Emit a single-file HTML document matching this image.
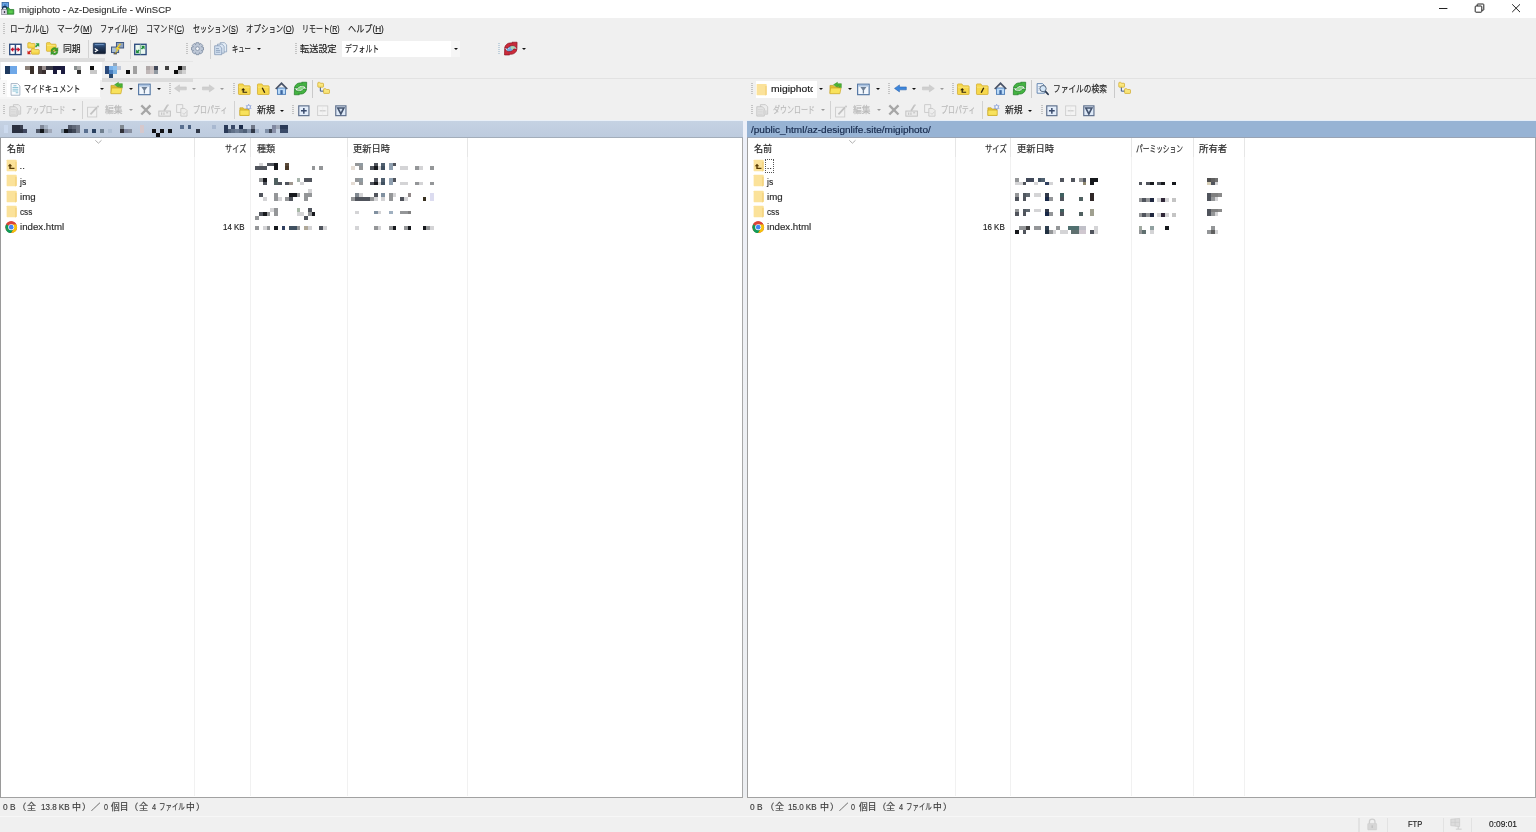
<!DOCTYPE html>
<html lang="ja"><head><meta charset="utf-8"><title>migiphoto - Az-DesignLife - WinSCP</title>
<style>
html,body{margin:0;padding:0}
body{width:1536px;height:832px;overflow:hidden;background:#f0f0f0;position:relative;
 font-family:"Liberation Sans","Noto Sans CJK JP",sans-serif;font-size:9.6px;color:#1b1b1b}
.a{position:absolute}
.t{position:absolute;white-space:nowrap;line-height:12px;height:12px;transform-origin:0 0;-webkit-text-stroke:0.17px currentColor}
.g{color:#b9b9b9}
svg{position:absolute;overflow:visible}
.hd{position:absolute;width:2px;height:12px;background:repeating-linear-gradient(to bottom,#c4c4c4 0,#c4c4c4 1px,transparent 1px,transparent 2px)}
.sep{position:absolute;width:1px;background:#d2d2d2}
.dd{position:absolute;width:0;height:0;border-left:2.3px solid transparent;border-right:2.3px solid transparent;border-top:2.7px solid #111}
.dd.g{border-top-color:#9a9a9a}
.cs{position:absolute;width:1px;top:138px;background:linear-gradient(#e6e6e6 0,#e6e6e6 19.5px,#f1f1f1 19.5px,#f1f1f1 100%)}

.m{position:absolute;display:block}
</style></head>
<body>
<div id="app" style="position:absolute;left:0;top:0;width:1536px;height:832px;will-change:transform">
<div class="a" style="left:0px;top:0px;width:1536px;height:18px;background:#fff;"></div>
<svg style="left:1.40px;top:1.90px" width="13.2" height="13" viewBox="0 0 16 16"><rect x="1.2" y="0.6" width="8" height="6.4" fill="#6fa9e6" stroke="#2d5f9c" stroke-width="1"/><path d="M3.4 2.2 L7 5.4 M7 2.2 L3.4 5.4" stroke="#3c78c0" stroke-width="1.2"/><path d="M1.8 9.4 V8 A2.6 2.6 0 0 1 7 8 V9.4" fill="none" stroke="#1d3657" stroke-width="1.6"/><rect x="0.6" y="9" width="7.2" height="6.6" fill="#dad7e4" stroke="#6c6c78" stroke-width="0.7"/><rect x="3.4" y="11.2" width="1.6" height="2.4" fill="#3a3a4a"/><path d="M7.4 7 L9.2 7 L11 9.2 H15.6 V15 H7.8 Z" fill="#3fae3f" stroke="#277a2c" stroke-width="0.9"/><rect x="9.4" y="10.4" width="4.8" height="3.4" fill="#5cc94f"/></svg>
<span class="t " id="t0" style="left:18.90px;top:3.57px;transform:scaleX(0.9884);color:#2e2e2e;-webkit-text-stroke:0.1px #2e2e2e">migiphoto - Az-DesignLife - WinSCP</span>
<svg style="left:1430px;top:0" width="106" height="17" viewBox="0 0 106 17"><g stroke="#222" stroke-width="1" fill="none"><path d="M9 8.5 H17.4"/><rect x="45.2" y="6" width="6.6" height="6.2" rx="0.8"/><path d="M47.2 6 V4.6 Q47.2 4 47.8 4 H53.2 Q53.8 4 53.8 4.6 V9.6 Q53.8 10.2 53.2 10.2 H51.8"/><path d="M82.2 4.3 L90 12.1 M90 4.3 L82.2 12.1"/></g></svg>
<div class="hd" style="left:3.2px;top:22.5px;height:12px"></div>
<span class="t " id="t1" style="left:10.00px;top:22.77px;transform:scaleX(0.7721);">ローカル(<u>L</u>)</span>
<span class="t " id="t2" style="left:56.90px;top:22.77px;transform:scaleX(0.8104);">マーク(<u>M</u>)</span>
<span class="t " id="t3" style="left:100.00px;top:22.77px;transform:scaleX(0.7403);">ファイル(<u>F</u>)</span>
<span class="t " id="t4" style="left:145.60px;top:22.77px;transform:scaleX(0.7367);">コマンド(<u>C</u>)</span>
<span class="t " id="t5" style="left:192.75px;top:22.77px;transform:scaleX(0.7404);">セッション(<u>S</u>)</span>
<span class="t " id="t6" style="left:245.90px;top:22.77px;transform:scaleX(0.7778);">オプション(<u>O</u>)</span>
<span class="t " id="t7" style="left:301.50px;top:22.77px;transform:scaleX(0.7251);">リモート(<u>R</u>)</span>
<span class="t " id="t8" style="left:347.75px;top:22.77px;transform:scaleX(0.8510);">ヘルプ(<u>H</u>)</span>
<div class="hd" style="left:3.2px;top:43.0px;height:12px"></div>
<svg style="left:9.00px;top:42.60px" width="12.8" height="12.8" viewBox="0 0 16 16"><rect x="0.9" y="1.6" width="14.2" height="12.9" fill="#fff" stroke="#2b4a7d" stroke-width="1.7"/><rect x="7.1" y="1.6" width="1.8" height="12.9" fill="#2b4a7d"/><path d="M1.9 8 L5.2 4.9 V6.9 H7.1 V9.1 H5.2 V11.1Z" fill="#c2122f"/><path d="M14.1 8 L10.8 4.9 V6.9 H8.9 V9.1 H10.8 V11.1Z" fill="#c2122f"/></svg>
<svg style="left:27.10px;top:42.20px" width="12.8" height="12.8" viewBox="0 0 16 16"><path d="M1 2.624 V1.6 Q1 0.8 1.8 0.8 H4.05 L5.6499999999999995 2.024 H9.2 Q10 2.024 10 2.824 V6.8 Q10 7.6 9.2 7.6 H1.8 Q1 7.6 1 6.8Z" fill="#f6d84c" stroke="#cfa726" stroke-width="0.9"/><path d="M1.6 3.724 H9.4" stroke="#fbe98a" stroke-width="0.9"/><path d="M5.5 10.059999999999999 V9.0 Q5.5 8.2 6.3 8.2 H8.91 L10.51 9.459999999999999 H14.5 Q15.3 9.459999999999999 15.3 10.26 V14.399999999999999 Q15.3 15.2 14.5 15.2 H6.3 Q5.5 15.2 5.5 14.399999999999999Z" fill="#f6d84c" stroke="#cfa726" stroke-width="0.9"/><path d="M6.1 11.159999999999998 H14.700000000000001" stroke="#fbe98a" stroke-width="0.9"/><path d="M10.5 1.5 H15.3 V6.3 L13.6 4.6 L11.4 6.8 L10 5.4 L12.2 3.2Z" fill="#2f9e3f"/><path d="M0.6 15.2 V10.6 L2.2 12.2 L4 10.4 L5.2 11.6 L3.4 13.4 L5 15.2Z" fill="#d2261c"/></svg>
<svg style="left:45.50px;top:42.20px" width="12.8" height="12.8" viewBox="0 0 16 16"><path d="M0.6 3.344 V1.6 Q0.6 0.8 1.4 0.8 H5.0 L6.6 2.7439999999999998 H11.799999999999999 Q12.6 2.7439999999999998 12.6 3.5439999999999996 V10.8 Q12.6 11.600000000000001 11.799999999999999 11.600000000000001 H1.4 Q0.6 11.600000000000001 0.6 10.8Z" fill="#f6d84c" stroke="#cfa726" stroke-width="0.9"/><path d="M1.2 4.444 H12.0" stroke="#fbe98a" stroke-width="0.9"/><path d="M6.2 11.2 A4.3 4.3 0 0 1 13.6 8.3 L14.9 7 V11.2 H10.7 L12.1 9.8 A2.3 2.3 0 0 0 8.3 11.2Z" fill="#3da32a" stroke="#22741a" stroke-width="0.5"/><path d="M14.9 11.8 A4.3 4.3 0 0 1 7.5 14.7 L6.2 16 V11.8 H10.4 L9 13.2 A2.3 2.3 0 0 0 12.8 11.8Z" fill="#3da32a" stroke="#22741a" stroke-width="0.5"/></svg>
<span class="t " id="t9" style="left:63.10px;top:42.87px;transform:scaleX(0.9225);">同期</span>
<div class="sep" style="left:88.2px;top:40px;height:19px"></div>
<svg style="left:92.80px;top:42.40px" width="12.8" height="12.8" viewBox="0 0 16 16"><linearGradient id="tg" x1="0" y1="0" x2="0" y2="1"><stop offset="0" stop-color="#3e689c"/><stop offset="0.45" stop-color="#22395c"/><stop offset="1" stop-color="#131d2e"/></linearGradient><rect x="0.4" y="1.4" width="15.2" height="13.2" rx="0.8" fill="url(#tg)" stroke="#15233a" stroke-width="0.8"/><path d="M2.6 3.2 H13.4" stroke="#86a9d6" stroke-width="0.9"/><path d="M2.2 8.2 L5.6 10.4 L2.2 12.6" fill="none" stroke="#fff" stroke-width="1.5"/></svg>
<svg style="left:111.00px;top:42.10px" width="13" height="13" viewBox="0 0 16 16"><rect x="6.7" y="0.6" width="8.8" height="6.8" fill="#8ea2bf" stroke="#3c5582" stroke-width="1.2"/><rect x="0.6" y="6.2" width="8.8" height="6.8" fill="#a9bed2" stroke="#3c5582" stroke-width="1.2"/><rect x="3.2" y="13.6" width="4" height="1.6" fill="#3a3f4a"/><path d="M10.6 2.2 L5.6 8.6 L8 8.8 L4.6 14.6 L11.4 7.4 L8.8 7.2 L12.4 2.6Z" fill="#f6dc3a" stroke="#c9a21a" stroke-width="0.5"/></svg>
<div class="sep" style="left:129.6px;top:40px;height:19px"></div>
<svg style="left:134.00px;top:42.60px" width="12.8" height="12.8" viewBox="0 0 16 16"><rect x="0.9" y="1.6" width="14.2" height="12.9" fill="#e9f7f0" stroke="#2b4a7d" stroke-width="1.7"/><rect x="7.3" y="1.6" width="1.2" height="12.9" fill="#7fae9a"/><path d="M8.6 3.4 H13.2 V8 L11.7 6.5 L10 8.2 L8.6 6.8 L10.2 5.1Z" fill="#1e8c3a"/><path d="M2.6 12.8 V8.2 L4.1 9.7 L5.8 8 L7.2 9.4 L5.5 11.1 L7.2 12.8Z" fill="#1e8c3a"/></svg>
<div class="hd" style="left:186.2px;top:43.0px;height:12px"></div>
<svg style="left:190.90px;top:42.20px" width="13" height="13" viewBox="0 0 16 16"><g stroke="#73839b" stroke-width="0.9" fill="#bcc6d5"><path d="M15.40 6.47 L15.40 9.93 L13.11 10.48 L13.23 10.20 L14.46 12.21 L12.01 14.66 L10.00 13.43 L10.28 13.31 L9.73 15.60 L6.27 15.60 L5.72 13.31 L6.00 13.43 L3.99 14.66 L1.54 12.21 L2.77 10.20 L2.89 10.48 L0.60 9.93 L0.60 6.47 L2.89 5.92 L2.77 6.20 L1.54 4.19 L3.99 1.74 L6.00 2.97 L5.72 3.09 L6.27 0.80 L9.73 0.80 L10.28 3.09 L10.00 2.97 L12.01 1.74 L14.46 4.19 L13.23 6.20 L13.11 5.92Z"/><circle cx="8" cy="8.2" r="2.3" fill="#f4f6fa"/></g></svg>
<div class="sep" style="left:209.8px;top:40px;height:19px"></div>
<svg style="left:214.00px;top:42.20px" width="13.2" height="13.2" viewBox="0 0 16 16"><path d="M7.5 0.8 H12.6 L15.3 3.4 V12 H7.5Z" fill="#e4edf7" stroke="#8399b5" stroke-width="0.9"/><path d="M4.2 2.6 H9.6 L12.3 5.2 V13.6 H4.2Z" fill="#dbe6f3" stroke="#8399b5" stroke-width="0.9"/><path d="M0.8 4.6 H6.6 L9.4 7.2 V15.4 H0.8Z" fill="#d2e0f0" stroke="#7d93b0" stroke-width="0.9"/><path d="M2.4 8 H6 M2.4 10.2 H7.6 M2.4 12.4 H7.6" stroke="#7d93b0" stroke-width="0.9"/></svg>
<span class="t " id="t10" style="left:231.60px;top:42.87px;transform:scaleX(0.6567);">キュー</span>
<div class="dd" style="left:257.4px;top:48.2px"></div>
<div class="hd" style="left:295.0px;top:43.0px;height:12px"></div>
<span class="t " id="t11" style="left:300.25px;top:42.87px;transform:scaleX(0.9577);">転送設定</span>
<div class="a" style="left:341.8px;top:40.9px;width:109.4px;height:16.2px;background:#fff;"></div>
<div class="a" style="left:451.2px;top:40.9px;width:9.3px;height:16.2px;background:#f6f6f6;"></div>
<span class="t " id="t12" style="left:344.60px;top:42.87px;transform:scaleX(0.7088);">デフォルト</span>
<div class="dd" style="left:453.5px;top:48.2px"></div>
<div class="hd" style="left:498.4px;top:43px;height:12px;background:repeating-linear-gradient(to bottom,#bfd0dc 0,#bfd0dc 1px,transparent 1px,transparent 2px)"></div>
<svg style="left:503.60px;top:42.20px" width="13.6" height="13.2" viewBox="0 0 16 16"><circle cx="8" cy="8" r="5.2" fill="#6fabe0"/><path d="M8 2.8 A5.2 5.2 0 0 1 12.6 10.4 L8 8Z" fill="#a9d6b4"/><path d="M4 6.2 L6 8.4 M9.6 9.6 L11 11.4" stroke="#e8f0f8" stroke-width="1.1"/><ellipse cx="8" cy="8" rx="4.6" ry="1.7" fill="none" transform="rotate(-28 8 8)"/><path d="M0.6 7.4 C0.9 3.6 4.2 1.1 7.8 1.1 C8.8 1.1 9.7 1.3 10.4 1.6 L9.4 0.3 H15.6 L15.4 8 L12.8 4.8 C11.6 4.3 9.8 4.1 8.2 4.5 C6.2 5 4.9 6.1 4.5 7.4Z" fill="#cc2a3a" stroke="#8d1522" stroke-width="0.9"/><path d="M0.6 7.4 C0.9 3.6 4.2 1.1 7.8 1.1 C8.8 1.1 9.7 1.3 10.4 1.6 L9.4 0.3 H15.6 L15.4 8 L12.8 4.8 C11.6 4.3 9.8 4.1 8.2 4.5 C6.2 5 4.9 6.1 4.5 7.4Z" fill="#cc2a3a" stroke="#8d1522" stroke-width="0.9" transform="rotate(180 8 8)"/></svg>
<div class="dd" style="left:522.3px;top:48.2px"></div>
<div class="a" style="left:0px;top:58.4px;width:105px;height:3.2px;background:#dddddd;"></div>
<div class="a" style="left:103.8px;top:60.5px;width:89.4px;height:1px;background:#e6e6e6;"></div>
<div class="a" style="left:0px;top:77.6px;width:1536px;height:0.9px;background:#e2e2e2;"></div>
<div class="a" style="left:102px;top:78px;width:91.2px;height:4px;background:#dcdcdc;"></div>
<div class="a" style="left:0.8px;top:61.5px;width:101.2px;height:18.6px;background:#fff;"></div>
<div class="a" style="left:0px;top:80px;width:8px;height:17.4px;background:#f8f8f8;"></div>
<div class="a" style="left:7px;top:80px;width:93.4px;height:17.2px;background:#fff;"></div>
<div class="a" style="left:0px;top:97px;width:101px;height:2.2px;background:#f5f5f5;"></div>
<div class="hd" style="left:3.2px;top:83.4px;height:11.5px"></div>
<svg style="left:8.60px;top:82.60px" width="12.8" height="12.8" viewBox="0 0 16 16"><path d="M2.6 0.7 H10.6 L13.6 3.7 V15.3 H2.6Z" fill="#fbfdff" stroke="#8c9db3" stroke-width="0.9"/><path d="M5.6 3.4 H9.4 M4.4 5.6 H11.6 M4.4 7.8 H11.6 M4.4 10 H11.6" stroke="#6fb4cc" stroke-width="1"/><path d="M8.4 12.2 H11.6" stroke="#6fb4cc" stroke-width="1"/></svg>
<span class="t " id="t13" style="left:23.75px;top:83.17px;transform:scaleX(0.7329);">マイドキュメント</span>
<div class="dd" style="left:99.6px;top:88.0px"></div>
<svg style="left:110.20px;top:82.30px" width="13" height="13" viewBox="0 0 16 16"><path d="M1.2 4.2 H5.4 L6.8 5.8 H12.6 V13.6 H1.2Z" fill="#e2c033" stroke="#c09a1c" stroke-width="0.8"/><path d="M5.6 3.4 L10.4 0.4 V2 H15.2 V7 H12 V5 H10.4 V6.6Z" fill="#4db431" stroke="#2e8a22" stroke-width="0.6"/><path d="M1 14.4 L2 7.4 H14.8 L13.4 14.4Z" fill="#f8e25c" stroke="#c9a623" stroke-width="0.8"/></svg>
<div class="dd" style="left:128.7px;top:88.0px"></div>
<svg style="left:138.10px;top:82.80px" width="12.8" height="12.8" viewBox="0 0 16 16"><rect x="0.8" y="1.5" width="14.4" height="13.1" fill="#f2f7fd" stroke="#4c719f" stroke-width="1.4"/><rect x="1.5" y="2.2" width="13" height="2.3" fill="#a9c2e0"/><path d="M4.2 4.9 H11.8 L8.8 9.2 V13.2 H7.2 V9.2Z" fill="#6e7f94"/></svg>
<div class="dd" style="left:156.5px;top:88.0px"></div>
<div class="hd" style="left:168.6px;top:83.4px;height:11.5px"></div>
<svg style="left:174.30px;top:82.30px" width="12.8" height="12.8" viewBox="0 0 16 16"><path d="M0.6 8 L6.8 3.6 V6.2 H15.4 V9.8 H6.8 V12.4Z" fill="#cfcfcf" stroke="#c4c4c4" stroke-width="0.7"/></svg>
<div class="dd g" style="left:192.2px;top:88.0px"></div>
<svg style="left:202.10px;top:82.30px" width="12.8" height="12.8" viewBox="0 0 16 16"><g transform="translate(16,0) scale(-1,1)"><path d="M0.6 8 L6.8 3.6 V6.2 H15.4 V9.8 H6.8 V12.4Z" fill="#cfcfcf" stroke="#c4c4c4" stroke-width="0.7"/></g></svg>
<div class="dd g" style="left:220.3px;top:88.0px"></div>
<div class="hd" style="left:233.0px;top:83.4px;height:11.5px"></div>
<svg style="left:238.00px;top:82.80px" width="12.6" height="12.6" viewBox="0 0 16 16"><path d="M0.6 4.212 V2.0 Q0.6 1.2 1.4 1.2 H6.26 L7.859999999999999 3.612 H14.6 Q15.4 3.612 15.4 4.412 V13.799999999999999 Q15.4 14.6 14.6 14.6 H1.4 Q0.6 14.6 0.6 13.799999999999999Z" fill="#f6d84c" stroke="#cfa726" stroke-width="0.9"/><path d="M1.2 5.312 H14.8" stroke="#fbe98a" stroke-width="0.9"/><path d="M6.6 6.2 L4 9.2 H5.8 V12.4 H11.6 V11 H7.4 V9.2 H9.2Z" fill="#33260c"/></svg>
<svg style="left:256.70px;top:82.80px" width="12.6" height="12.6" viewBox="0 0 16 16"><path d="M0.6 4.212 V2.0 Q0.6 1.2 1.4 1.2 H6.26 L7.859999999999999 3.612 H14.6 Q15.4 3.612 15.4 4.412 V13.799999999999999 Q15.4 14.6 14.6 14.6 H1.4 Q0.6 14.6 0.6 13.799999999999999Z" fill="#f6d84c" stroke="#cfa726" stroke-width="0.9"/><path d="M1.2 5.312 H14.8" stroke="#fbe98a" stroke-width="0.9"/><path d="M6.6 6 L9.8 12.4" stroke="#33260c" stroke-width="1.7"/></svg>
<svg style="left:275.00px;top:82.20px" width="13" height="13" viewBox="0 0 16 16"><rect x="3" y="7.4" width="10" height="7.8" fill="#badaf8" stroke="#4a7bb6" stroke-width="1.1"/><rect x="6.6" y="10" width="2.9" height="5.2" fill="#3e69a4"/><path d="M0.9 8.6 L8 1.6 L15.1 8.6" fill="none" stroke="#4a5468" stroke-width="2.1" stroke-linejoin="miter"/></svg>
<svg style="left:293.80px;top:82.20px" width="13" height="13" viewBox="0 0 16 16"><ellipse cx="8" cy="8" rx="4.6" ry="1.7" fill="#86d882" transform="rotate(-28 8 8)"/><path d="M0.6 7.4 C0.9 3.6 4.2 1.1 7.8 1.1 C8.8 1.1 9.7 1.3 10.4 1.6 L9.4 0.3 H15.6 L15.4 8 L12.8 4.8 C11.6 4.3 9.8 4.1 8.2 4.5 C6.2 5 4.9 6.1 4.5 7.4Z" fill="#44b441" stroke="#1f7d27" stroke-width="0.9"/><path d="M0.6 7.4 C0.9 3.6 4.2 1.1 7.8 1.1 C8.8 1.1 9.7 1.3 10.4 1.6 L9.4 0.3 H15.6 L15.4 8 L12.8 4.8 C11.6 4.3 9.8 4.1 8.2 4.5 C6.2 5 4.9 6.1 4.5 7.4Z" fill="#44b441" stroke="#1f7d27" stroke-width="0.9" transform="rotate(180 8 8)"/></svg>
<div class="sep" style="left:312.3px;top:80.4px;height:18.0px;background:#cacaca"></div>
<svg style="left:316.80px;top:82.30px" width="13.2" height="12.4" viewBox="0 0 16 16"><path d="M3.8 6.4 V11.8 H8.6" fill="none" stroke="#2c4b7c" stroke-width="1.2"/><path d="M0.5 2.2159999999999997 V1.3 Q0.5 0.5 1.3 0.5 H2.83 L4.43 1.6159999999999999 H7.1000000000000005 Q7.9 1.6159999999999999 7.9 2.416 V5.9 Q7.9 6.7 7.1000000000000005 6.7 H1.3 Q0.5 6.7 0.5 5.9Z" fill="#f8e476" stroke="#cfa726" stroke-width="0.9"/><path d="M1.1 3.316 H7.300000000000001" stroke="#fbe98a" stroke-width="0.9"/><path d="M8 10.315999999999999 V9.4 Q8 8.6 8.8 8.6 H10.42 L12.02 9.716 H14.799999999999999 Q15.6 9.716 15.6 10.516 V14.0 Q15.6 14.8 14.799999999999999 14.8 H8.8 Q8 14.8 8 14.0Z" fill="#f8e476" stroke="#cfa726" stroke-width="0.9"/><path d="M8.6 11.415999999999999 H15.0" stroke="#fbe98a" stroke-width="0.9"/></svg>
<div class="hd" style="left:751.0px;top:83.4px;height:11.5px"></div>
<div class="a" style="left:756px;top:80.6px;width:61.3px;height:17px;background:#fff;"></div>
<svg style="left:756.40px;top:82.80px" width="12.8" height="13.2" viewBox="0 0 16 16"><path d="M1.6 0.9 H12.4 Q13.4 0.9 13.4 1.9 V14.2 Q13.4 15.2 12.4 15.2 H1.6 Q0.8 15.2 0.8 14.4 V1.7 Q0.8 0.9 1.6 0.9Z" fill="#fbe29a"/><path d="M11.2 3.4 H13.4 V14.2 Q13.4 15.2 12.4 15.2 H11.2Z" fill="#f5d684"/></svg>
<div class="a" style="left:770.75px;top:80px;width:42.4px;height:18px;overflow:hidden">
<span class="t " id="t14" style="left:0.00px;top:3.17px;transform:scaleX(1.0767);">migiphoto</span>
</div>
<div class="dd" style="left:818.7px;top:88.0px"></div>
<svg style="left:829.40px;top:82.30px" width="13" height="13" viewBox="0 0 16 16"><path d="M1.2 4.2 H5.4 L6.8 5.8 H12.6 V13.6 H1.2Z" fill="#e2c033" stroke="#c09a1c" stroke-width="0.8"/><path d="M5.6 3.4 L10.4 0.4 V2 H15.2 V7 H12 V5 H10.4 V6.6Z" fill="#4db431" stroke="#2e8a22" stroke-width="0.6"/><path d="M1 14.4 L2 7.4 H14.8 L13.4 14.4Z" fill="#f8e25c" stroke="#c9a623" stroke-width="0.8"/></svg>
<div class="dd" style="left:847.7px;top:88.0px"></div>
<svg style="left:857.40px;top:82.80px" width="12.8" height="12.8" viewBox="0 0 16 16"><rect x="0.8" y="1.5" width="14.4" height="13.1" fill="#f2f7fd" stroke="#4c719f" stroke-width="1.4"/><rect x="1.5" y="2.2" width="13" height="2.3" fill="#a9c2e0"/><path d="M4.2 4.9 H11.8 L8.8 9.2 V13.2 H7.2 V9.2Z" fill="#6e7f94"/></svg>
<div class="dd" style="left:875.7px;top:88.0px"></div>
<div class="hd" style="left:888.0px;top:83.4px;height:11.5px"></div>
<svg style="left:893.50px;top:82.30px" width="12.8" height="12.8" viewBox="0 0 16 16"><path d="M0.6 8 L6.8 3.6 V6.2 H15.4 V9.8 H6.8 V12.4Z" fill="#3d86dc" stroke="#2a62ad" stroke-width="0.7"/></svg>
<div class="dd" style="left:911.7px;top:88.0px"></div>
<svg style="left:921.50px;top:82.30px" width="12.8" height="12.8" viewBox="0 0 16 16"><g transform="translate(16,0) scale(-1,1)"><path d="M0.6 8 L6.8 3.6 V6.2 H15.4 V9.8 H6.8 V12.4Z" fill="#cfcfcf" stroke="#c4c4c4" stroke-width="0.7"/></g></svg>
<div class="dd g" style="left:939.7px;top:88.0px"></div>
<div class="hd" style="left:952.2px;top:83.4px;height:11.5px"></div>
<svg style="left:957.20px;top:82.80px" width="12.6" height="12.6" viewBox="0 0 16 16"><path d="M0.6 4.212 V2.0 Q0.6 1.2 1.4 1.2 H6.26 L7.859999999999999 3.612 H14.6 Q15.4 3.612 15.4 4.412 V13.799999999999999 Q15.4 14.6 14.6 14.6 H1.4 Q0.6 14.6 0.6 13.799999999999999Z" fill="#f6d84c" stroke="#cfa726" stroke-width="0.9"/><path d="M1.2 5.312 H14.8" stroke="#fbe98a" stroke-width="0.9"/><path d="M6.6 6.2 L4 9.2 H5.8 V12.4 H11.6 V11 H7.4 V9.2 H9.2Z" fill="#33260c"/></svg>
<svg style="left:975.80px;top:82.80px" width="12.6" height="12.6" viewBox="0 0 16 16"><path d="M0.6 4.212 V2.0 Q0.6 1.2 1.4 1.2 H6.26 L7.859999999999999 3.612 H14.6 Q15.4 3.612 15.4 4.412 V13.799999999999999 Q15.4 14.6 14.6 14.6 H1.4 Q0.6 14.6 0.6 13.799999999999999Z" fill="#f6d84c" stroke="#cfa726" stroke-width="0.9"/><path d="M1.2 5.312 H14.8" stroke="#fbe98a" stroke-width="0.9"/><path d="M9.8 6 L6.6 12.4" stroke="#33260c" stroke-width="1.7"/></svg>
<svg style="left:994.30px;top:82.20px" width="13" height="13" viewBox="0 0 16 16"><rect x="3" y="7.4" width="10" height="7.8" fill="#badaf8" stroke="#4a7bb6" stroke-width="1.1"/><rect x="6.6" y="10" width="2.9" height="5.2" fill="#3e69a4"/><path d="M0.9 8.6 L8 1.6 L15.1 8.6" fill="none" stroke="#4a5468" stroke-width="2.1" stroke-linejoin="miter"/></svg>
<svg style="left:1013.20px;top:82.20px" width="13" height="13" viewBox="0 0 16 16"><ellipse cx="8" cy="8" rx="4.6" ry="1.7" fill="#86d882" transform="rotate(-28 8 8)"/><path d="M0.6 7.4 C0.9 3.6 4.2 1.1 7.8 1.1 C8.8 1.1 9.7 1.3 10.4 1.6 L9.4 0.3 H15.6 L15.4 8 L12.8 4.8 C11.6 4.3 9.8 4.1 8.2 4.5 C6.2 5 4.9 6.1 4.5 7.4Z" fill="#44b441" stroke="#1f7d27" stroke-width="0.9"/><path d="M0.6 7.4 C0.9 3.6 4.2 1.1 7.8 1.1 C8.8 1.1 9.7 1.3 10.4 1.6 L9.4 0.3 H15.6 L15.4 8 L12.8 4.8 C11.6 4.3 9.8 4.1 8.2 4.5 C6.2 5 4.9 6.1 4.5 7.4Z" fill="#44b441" stroke="#1f7d27" stroke-width="0.9" transform="rotate(180 8 8)"/></svg>
<div class="sep" style="left:1031.2px;top:80.4px;height:18.0px;background:#cacaca"></div>
<svg style="left:1036.00px;top:82.80px" width="13.2" height="12.2" viewBox="0 0 16 16"><path d="M0.8 0.8 H8 L10.4 3.2 V13.4 H0.8Z" fill="#eff5fc" stroke="#416b9f" stroke-width="1"/><path d="M2.4 4.6 H5 M2.4 7 H4 M2.4 9.4 H4" stroke="#8fa8c8" stroke-width="0.9"/><path d="M11.4 10.6 L15.2 14.8" stroke="#27364f" stroke-width="2.3" stroke-linecap="round"/><circle cx="8.6" cy="7.4" r="4.1" fill="#d3e6f8" stroke="#56687f" stroke-width="1.3"/></svg>
<span class="t " id="t15" style="left:1052.80px;top:83.17px;transform:scaleX(0.8026);">ファイルの検索</span>
<div class="sep" style="left:1113.6px;top:80.4px;height:18.0px;background:#cacaca"></div>
<svg style="left:1118.30px;top:82.30px" width="13.2" height="12.4" viewBox="0 0 16 16"><path d="M3.8 6.4 V11.8 H8.6" fill="none" stroke="#2c4b7c" stroke-width="1.2"/><path d="M0.5 2.2159999999999997 V1.3 Q0.5 0.5 1.3 0.5 H2.83 L4.43 1.6159999999999999 H7.1000000000000005 Q7.9 1.6159999999999999 7.9 2.416 V5.9 Q7.9 6.7 7.1000000000000005 6.7 H1.3 Q0.5 6.7 0.5 5.9Z" fill="#f8e476" stroke="#cfa726" stroke-width="0.9"/><path d="M1.1 3.316 H7.300000000000001" stroke="#fbe98a" stroke-width="0.9"/><path d="M8 10.315999999999999 V9.4 Q8 8.6 8.8 8.6 H10.42 L12.02 9.716 H14.799999999999999 Q15.6 9.716 15.6 10.516 V14.0 Q15.6 14.8 14.799999999999999 14.8 H8.8 Q8 14.8 8 14.0Z" fill="#f8e476" stroke="#cfa726" stroke-width="0.9"/><path d="M8.6 11.415999999999999 H15.0" stroke="#fbe98a" stroke-width="0.9"/></svg>
<div class="hd" style="left:3.4px;top:104.6px;height:10.5px"></div>
<svg style="left:8.80px;top:104.30px" width="12.6" height="12.6" viewBox="0 0 16 16"><path d="M5.6 0.8 H12 L14.8 3.6 V13 H5.6Z" fill="#ececec" stroke="#bcbcbc" stroke-width="0.9"/><path d="M1 3.4 H8 L10.6 6 V15.4 H1Z" fill="#e3e3e3" stroke="#bcbcbc" stroke-width="0.9"/><path d="M2.6 7 H8.6 M2.6 9.2 H8.6 M2.6 11.4 H8.6 M2.6 13.4 H8.6" stroke="#cfcfcf" stroke-width="0.8"/><path d="M9 8 h4.6 v5.4 h-4.6z" fill="#d6d6d6"/></svg>
<span class="t g" id="t16" style="left:26.40px;top:104.27px;transform:scaleX(0.6836);">アップロード</span>
<div class="dd g" style="left:72.3px;top:109.3px"></div>
<div class="sep" style="left:82.2px;top:101px;height:18px"></div>
<svg style="left:87.30px;top:104.50px" width="12.6" height="12.6" viewBox="0 0 16 16"><rect x="0.8" y="2.8" width="11.6" height="12.4" fill="#f1f1f1" stroke="#c6c6c6" stroke-width="1"/><path d="M4.4 12 L12.6 3" stroke="#c2c2c2" stroke-width="2.2"/><circle cx="14" cy="1.9" r="1.3" fill="#c9c9c9"/></svg>
<span class="t g" id="t17" style="left:104.80px;top:104.27px;transform:scaleX(0.9173);">編集</span>
<div class="dd g" style="left:129.2px;top:109.3px"></div>
<svg style="left:139.70px;top:104.20px" width="11.8" height="11.8" viewBox="0 0 16 16"><path d="M1.8 1.8 L14.2 14.2 M14.2 1.8 L1.8 14.2" stroke="#a6a6a6" stroke-width="3.2"/></svg>
<svg style="left:157.80px;top:104.10px" width="13.2" height="12.8" viewBox="0 0 16 16"><rect x="0.8" y="8.8" width="14.4" height="6.4" fill="#ebebeb" stroke="#bdbdbd" stroke-width="1.1"/><path d="M4.4 10.6 V13.6 M7.2 10.6 V13.6 M10 11 H12.4" stroke="#bcbcbc" stroke-width="1.2"/><path d="M7.4 8.4 L11.8 1.4" stroke="#c2c2c2" stroke-width="2.2"/><circle cx="12.2" cy="1.4" r="1.1" fill="#c9c9c9"/></svg>
<svg style="left:176.00px;top:104.30px" width="12.8" height="12.8" viewBox="0 0 16 16"><path d="M0.8 0.8 H8.4 V10.6 H0.8Z" fill="#f1f1f1" stroke="#c4c4c4" stroke-width="1"/><path d="M6 5.6 H11.2 L13.8 8.2 V15.2 H6Z" fill="#ededed" stroke="#c4c4c4" stroke-width="1"/><path d="M8 11 L10 13 L13 9.6" fill="none" stroke="#cdcdcd" stroke-width="1.1"/></svg>
<span class="t g" id="t18" style="left:193.40px;top:104.27px;transform:scaleX(0.7246);">プロパティ</span>
<div class="sep" style="left:234.2px;top:101px;height:18px"></div>
<svg style="left:239.00px;top:104.00px" width="12.9" height="12.2" viewBox="0 0 16 16"><path d="M0.7 5 H5 L6.4 6.6 H12.6 V15 H0.7Z" fill="#e6c53a" stroke="#c09a1c" stroke-width="0.8"/><path d="M0.7 15 V8 H12.9 V15Z" fill="#f8e25c" stroke="#c9a623" stroke-width="0.8"/><path d="M12.2 0.4 L13.1 2.6 L15.4 2.2 L14 4 L15.4 5.8 L13.1 5.4 L12.2 7.6 L11.3 5.4 L9 5.8 L10.4 4 L9 2.2 L11.3 2.6Z" fill="#f4f8ff" stroke="#5878c8" stroke-width="0.7"/></svg>
<span class="t " id="t19" style="left:257.00px;top:104.27px;transform:scaleX(0.9433);">新規</span>
<div class="dd" style="left:279.7px;top:109.5px"></div>
<div class="hd" style="left:292.2px;top:104.6px;height:10.5px"></div>
<svg style="left:298.20px;top:104.50px" width="11.7" height="11.5" viewBox="0 0 16 16"><rect x="0.9" y="1.2" width="14.2" height="13.6" fill="#e3edfa" stroke="#5d6e8b" stroke-width="1.6"/><path d="M4 8 H12 M8 4 V12" stroke="#3a4b6c" stroke-width="2.1"/></svg>
<svg style="left:316.80px;top:104.50px" width="11.4" height="11.5" viewBox="0 0 16 16"><rect x="0.9" y="1.2" width="14.2" height="13.6" fill="#f3f3f3" stroke="#cdcdcd" stroke-width="1.2"/><path d="M4 8 H12" stroke="#c6c6c6" stroke-width="1.8"/><path d="M1 8H15 M8 1.4V14.6" stroke="#e4e4e4" stroke-width="0.6"/></svg>
<svg style="left:335.20px;top:104.50px" width="11.7" height="11.5" viewBox="0 0 16 16"><rect x="0.9" y="1.2" width="14.2" height="13.6" fill="#dfeaf8" stroke="#5d6e8b" stroke-width="1.6"/><path d="M3.8 4.2 H12.2 L8 12.4Z" fill="#d5e2f2" stroke="#44546f" stroke-width="2.3" stroke-linejoin="miter"/></svg>
<div class="hd" style="left:750.7px;top:104.6px;height:10.5px"></div>
<svg style="left:756.10px;top:104.30px" width="12.6" height="12.6" viewBox="0 0 16 16"><path d="M5.6 0.8 H12 L14.8 3.6 V13 H5.6Z" fill="#ececec" stroke="#bcbcbc" stroke-width="0.9"/><path d="M1 3.4 H8 L10.6 6 V15.4 H1Z" fill="#e3e3e3" stroke="#bcbcbc" stroke-width="0.9"/><path d="M2.6 7 H8.6 M2.6 9.2 H8.6 M2.6 11.4 H8.6 M2.6 13.4 H8.6" stroke="#cfcfcf" stroke-width="0.8"/><path d="M9 8 h4.6 v5.4 h-4.6z" fill="#d6d6d6"/></svg>
<span class="t g" id="t20" style="left:772.90px;top:104.27px;transform:scaleX(0.7270);">ダウンロード</span>
<div class="dd g" style="left:820.7px;top:109.3px"></div>
<div class="sep" style="left:830.2px;top:101px;height:18px"></div>
<svg style="left:834.80px;top:104.50px" width="12.6" height="12.6" viewBox="0 0 16 16"><rect x="0.8" y="2.8" width="11.6" height="12.4" fill="#f1f1f1" stroke="#c6c6c6" stroke-width="1"/><path d="M4.4 12 L12.6 3" stroke="#c2c2c2" stroke-width="2.2"/><circle cx="14" cy="1.9" r="1.3" fill="#c9c9c9"/></svg>
<span class="t g" id="t21" style="left:852.90px;top:104.27px;transform:scaleX(0.9121);">編集</span>
<div class="dd g" style="left:876.8px;top:109.3px"></div>
<svg style="left:887.50px;top:104.20px" width="11.8" height="11.8" viewBox="0 0 16 16"><path d="M1.8 1.8 L14.2 14.2 M14.2 1.8 L1.8 14.2" stroke="#a6a6a6" stroke-width="3.2"/></svg>
<svg style="left:905.40px;top:104.10px" width="13.2" height="12.8" viewBox="0 0 16 16"><rect x="0.8" y="8.8" width="14.4" height="6.4" fill="#ebebeb" stroke="#bdbdbd" stroke-width="1.1"/><path d="M4.4 10.6 V13.6 M7.2 10.6 V13.6 M10 11 H12.4" stroke="#bcbcbc" stroke-width="1.2"/><path d="M7.4 8.4 L11.8 1.4" stroke="#c2c2c2" stroke-width="2.2"/><circle cx="12.2" cy="1.4" r="1.1" fill="#c9c9c9"/></svg>
<svg style="left:923.80px;top:104.30px" width="12.8" height="12.8" viewBox="0 0 16 16"><path d="M0.8 0.8 H8.4 V10.6 H0.8Z" fill="#f1f1f1" stroke="#c4c4c4" stroke-width="1"/><path d="M6 5.6 H11.2 L13.8 8.2 V15.2 H6Z" fill="#ededed" stroke="#c4c4c4" stroke-width="1"/><path d="M8 11 L10 13 L13 9.6" fill="none" stroke="#cdcdcd" stroke-width="1.1"/></svg>
<span class="t g" id="t22" style="left:941.40px;top:104.27px;transform:scaleX(0.7246);">プロパティ</span>
<div class="sep" style="left:982.0px;top:101px;height:18px"></div>
<svg style="left:987.00px;top:104.00px" width="12.9" height="12.2" viewBox="0 0 16 16"><path d="M0.7 5 H5 L6.4 6.6 H12.6 V15 H0.7Z" fill="#e6c53a" stroke="#c09a1c" stroke-width="0.8"/><path d="M0.7 15 V8 H12.9 V15Z" fill="#f8e25c" stroke="#c9a623" stroke-width="0.8"/><path d="M12.2 0.4 L13.1 2.6 L15.4 2.2 L14 4 L15.4 5.8 L13.1 5.4 L12.2 7.6 L11.3 5.4 L9 5.8 L10.4 4 L9 2.2 L11.3 2.6Z" fill="#f4f8ff" stroke="#5878c8" stroke-width="0.7"/></svg>
<span class="t " id="t23" style="left:1005.00px;top:104.27px;transform:scaleX(0.9225);">新規</span>
<div class="dd" style="left:1027.5px;top:109.5px"></div>
<div class="hd" style="left:1040.8px;top:104.6px;height:10.5px"></div>
<svg style="left:1045.80px;top:104.50px" width="11.7" height="11.5" viewBox="0 0 16 16"><rect x="0.9" y="1.2" width="14.2" height="13.6" fill="#e3edfa" stroke="#5d6e8b" stroke-width="1.6"/><path d="M4 8 H12 M8 4 V12" stroke="#3a4b6c" stroke-width="2.1"/></svg>
<svg style="left:1064.80px;top:104.50px" width="11.4" height="11.5" viewBox="0 0 16 16"><rect x="0.9" y="1.2" width="14.2" height="13.6" fill="#f3f3f3" stroke="#cdcdcd" stroke-width="1.2"/><path d="M4 8 H12" stroke="#c6c6c6" stroke-width="1.8"/><path d="M1 8H15 M8 1.4V14.6" stroke="#e4e4e4" stroke-width="0.6"/></svg>
<svg style="left:1083.20px;top:104.50px" width="11.7" height="11.5" viewBox="0 0 16 16"><rect x="0.9" y="1.2" width="14.2" height="13.6" fill="#dfeaf8" stroke="#5d6e8b" stroke-width="1.6"/><path d="M3.8 4.2 H12.2 L8 12.4Z" fill="#d5e2f2" stroke="#44546f" stroke-width="2.3" stroke-linejoin="miter"/></svg>
<div class="a" style="left:0px;top:120.2px;width:742.8px;height:1px;background:#eaf0f8;"></div>
<div class="a" style="left:0px;top:121.2px;width:742.8px;height:16.2px;background:linear-gradient(#c5d2e3,#bdcbde);"></div>
<div class="a" style="left:0px;top:137.1px;width:742.8px;height:0.9px;background:#a3adba;"></div>
<div class="a" style="left:742.8px;top:120.5px;width:4.6px;height:676.8px;background:linear-gradient(#edf0f9,#eef0f4 30%,#eceef1);"></div>
<div class="a" style="left:747.3px;top:120.2px;width:788.7px;height:1px;background:#e6eef8;"></div>
<div class="a" style="left:747.3px;top:121.2px;width:788.7px;height:16.2px;background:#97b3d4;"></div>
<div class="a" style="left:747.3px;top:137.1px;width:788.7px;height:0.9px;background:#98a3b4;"></div>
<span class="t " id="t24" style="left:751.00px;top:123.57px;transform:scaleX(1.0435);color:#15284b">/public_html/az-designlife.site/migiphoto/</span>
<div class="a" style="left:0px;top:138px;width:742.8px;height:659.7px;background:#fff;border-left:1.2px solid #9a9a9a;border-right:1px solid #a8a8a8;border-bottom:1px solid #a2a2a2;box-sizing:border-box"></div>
<div class="a" style="left:747.3px;top:138px;width:788.7px;height:659.7px;background:#fff;border-left:1px solid #a0a0a0;border-right:1px solid #a8a8a8;border-bottom:1px solid #a2a2a2;box-sizing:border-box"></div>
<div class="cs" style="left:194.2px;height:658px"></div>
<div class="cs" style="left:250.2px;height:658px"></div>
<div class="cs" style="left:346.5px;height:658px"></div>
<div class="cs" style="left:466.6px;height:658px"></div>
<div class="cs" style="left:955px;height:658px"></div>
<div class="cs" style="left:1010px;height:658px"></div>
<div class="cs" style="left:1131px;height:658px"></div>
<div class="cs" style="left:1193.2px;height:658px"></div>
<div class="cs" style="left:1243.5px;height:658px"></div>
<svg style="left:95.39999999999999px;top:139.8px" width="6.8" height="3.6" viewBox="0 0 6.8 3.6"><path d="M0.3 0.3 L3.4 3.2 L6.5 0.3" fill="none" stroke="#9a9a9a" stroke-width="0.8"/></svg>
<svg style="left:848.8000000000001px;top:139.8px" width="6.8" height="3.6" viewBox="0 0 6.8 3.6"><path d="M0.3 0.3 L3.4 3.2 L6.5 0.3" fill="none" stroke="#9a9a9a" stroke-width="0.8"/></svg>
<span class="t " id="t25" style="left:6.90px;top:142.87px;transform:scaleX(0.9433);color:#2a2a2a">名前</span>
<span class="t " id="t26" style="left:224.60px;top:142.87px;transform:scaleX(0.7474);color:#2a2a2a">サイズ</span>
<span class="t " id="t27" style="left:256.50px;top:142.87px;transform:scaleX(0.9433);color:#2a2a2a">種類</span>
<span class="t " id="t28" style="left:352.90px;top:142.87px;transform:scaleX(0.9603);color:#2a2a2a">更新日時</span>
<span class="t " id="t29" style="left:754.00px;top:142.87px;transform:scaleX(0.9511);color:#2a2a2a">名前</span>
<span class="t " id="t30" style="left:984.50px;top:142.87px;transform:scaleX(0.7684);color:#2a2a2a">サイズ</span>
<span class="t " id="t31" style="left:1017.00px;top:142.87px;transform:scaleX(0.9616);color:#2a2a2a">更新日時</span>
<span class="t " id="t32" style="left:1136.00px;top:142.87px;transform:scaleX(0.6999);color:#2a2a2a">パーミッション</span>
<span class="t " id="t33" style="left:1199.25px;top:142.87px;transform:scaleX(0.9781);color:#2a2a2a">所有者</span>
<svg style="left:5.60px;top:159.20px" width="12.8" height="12.8" viewBox="0 0 16 16"><path d="M1.6 0.9 H12.4 Q13.4 0.9 13.4 1.9 V14.2 Q13.4 15.2 12.4 15.2 H1.6 Q0.8 15.2 0.8 14.4 V1.7 Q0.8 0.9 1.6 0.9Z" fill="#fbe29a"/><path d="M11.2 3.4 H13.4 V14.2 Q13.4 15.2 12.4 15.2 H11.2Z" fill="#f5d684"/><path d="M5 6 L2.2 9.2 H4.1 V12.6 H10.6 V11 H5.9 V9.2 H7.8Z" fill="#5a3d06"/></svg>
<span class="t " id="t34" style="left:19.50px;top:160.27px;transform:scaleX(1.0000);color:#2c2c2c">..</span>
<svg style="left:5.60px;top:174.45px" width="12.8" height="12.8" viewBox="0 0 16 16"><path d="M1.6 0.9 H12.4 Q13.4 0.9 13.4 1.9 V14.2 Q13.4 15.2 12.4 15.2 H1.6 Q0.8 15.2 0.8 14.4 V1.7 Q0.8 0.9 1.6 0.9Z" fill="#fbe29a"/><path d="M11.2 3.4 H13.4 V14.2 Q13.4 15.2 12.4 15.2 H11.2Z" fill="#f5d684"/></svg>
<span class="t " id="t35" style="left:19.50px;top:175.52px;transform:scaleX(0.8937);color:#2c2c2c">js</span>
<svg style="left:5.60px;top:189.70px" width="12.8" height="12.8" viewBox="0 0 16 16"><path d="M1.6 0.9 H12.4 Q13.4 0.9 13.4 1.9 V14.2 Q13.4 15.2 12.4 15.2 H1.6 Q0.8 15.2 0.8 14.4 V1.7 Q0.8 0.9 1.6 0.9Z" fill="#fbe29a"/><path d="M11.2 3.4 H13.4 V14.2 Q13.4 15.2 12.4 15.2 H11.2Z" fill="#f5d684"/></svg>
<span class="t " id="t36" style="left:19.50px;top:190.77px;transform:scaleX(1.0085);color:#2c2c2c">img</span>
<svg style="left:5.60px;top:204.95px" width="12.8" height="12.8" viewBox="0 0 16 16"><path d="M1.6 0.9 H12.4 Q13.4 0.9 13.4 1.9 V14.2 Q13.4 15.2 12.4 15.2 H1.6 Q0.8 15.2 0.8 14.4 V1.7 Q0.8 0.9 1.6 0.9Z" fill="#fbe29a"/><path d="M11.2 3.4 H13.4 V14.2 Q13.4 15.2 12.4 15.2 H11.2Z" fill="#f5d684"/></svg>
<span class="t " id="t37" style="left:19.50px;top:206.02px;transform:scaleX(0.8547);color:#2c2c2c">css</span>
<svg style="left:5.10px;top:221.00px" width="12.4" height="12.4" viewBox="0 0 16 16"><circle cx="8" cy="8" r="7.6" fill="#db4437"/><path d="M8 8 L1.42 11.8 A7.6 7.6 0 0 0 8 15.6 L11.8 9 Z" fill="#0f9d58"/><path d="M8 8 L1.42 4.2 A7.6 7.6 0 0 0 1.42 11.8 L4.9 9.8Z" fill="#0f9d58"/><path d="M8 15.6 A7.6 7.6 0 0 0 14.58 4.2 H8 L11.4 9.8Z" fill="#f4c20d"/><path d="M1.42 4.2 A7.6 7.6 0 0 1 14.58 4.2 H8Z" fill="#db4437"/><circle cx="8" cy="8" r="3.9" fill="#fff"/><circle cx="8" cy="8" r="3" fill="#4285f4"/></svg>
<span class="t " id="t38" style="left:19.50px;top:221.27px;transform:scaleX(1.0084);color:#2c2c2c">index.html</span>
<svg style="left:752.90px;top:159.20px" width="12.8" height="12.8" viewBox="0 0 16 16"><path d="M1.6 0.9 H12.4 Q13.4 0.9 13.4 1.9 V14.2 Q13.4 15.2 12.4 15.2 H1.6 Q0.8 15.2 0.8 14.4 V1.7 Q0.8 0.9 1.6 0.9Z" fill="#fbe29a"/><path d="M11.2 3.4 H13.4 V14.2 Q13.4 15.2 12.4 15.2 H11.2Z" fill="#f5d684"/><path d="M5 6 L2.2 9.2 H4.1 V12.6 H10.6 V11 H5.9 V9.2 H7.8Z" fill="#5a3d06"/></svg>
<span class="t " id="t39" style="left:766.70px;top:160.27px;transform:scaleX(1.0000);color:#2c2c2c">..</span>
<svg style="left:752.90px;top:174.45px" width="12.8" height="12.8" viewBox="0 0 16 16"><path d="M1.6 0.9 H12.4 Q13.4 0.9 13.4 1.9 V14.2 Q13.4 15.2 12.4 15.2 H1.6 Q0.8 15.2 0.8 14.4 V1.7 Q0.8 0.9 1.6 0.9Z" fill="#fbe29a"/><path d="M11.2 3.4 H13.4 V14.2 Q13.4 15.2 12.4 15.2 H11.2Z" fill="#f5d684"/></svg>
<span class="t " id="t40" style="left:766.70px;top:175.52px;transform:scaleX(0.8937);color:#2c2c2c">js</span>
<svg style="left:752.90px;top:189.70px" width="12.8" height="12.8" viewBox="0 0 16 16"><path d="M1.6 0.9 H12.4 Q13.4 0.9 13.4 1.9 V14.2 Q13.4 15.2 12.4 15.2 H1.6 Q0.8 15.2 0.8 14.4 V1.7 Q0.8 0.9 1.6 0.9Z" fill="#fbe29a"/><path d="M11.2 3.4 H13.4 V14.2 Q13.4 15.2 12.4 15.2 H11.2Z" fill="#f5d684"/></svg>
<span class="t " id="t41" style="left:766.70px;top:190.77px;transform:scaleX(1.0085);color:#2c2c2c">img</span>
<svg style="left:752.90px;top:204.95px" width="12.8" height="12.8" viewBox="0 0 16 16"><path d="M1.6 0.9 H12.4 Q13.4 0.9 13.4 1.9 V14.2 Q13.4 15.2 12.4 15.2 H1.6 Q0.8 15.2 0.8 14.4 V1.7 Q0.8 0.9 1.6 0.9Z" fill="#fbe29a"/><path d="M11.2 3.4 H13.4 V14.2 Q13.4 15.2 12.4 15.2 H11.2Z" fill="#f5d684"/></svg>
<span class="t " id="t42" style="left:766.70px;top:206.02px;transform:scaleX(0.8547);color:#2c2c2c">css</span>
<svg style="left:752.40px;top:221.00px" width="12.4" height="12.4" viewBox="0 0 16 16"><circle cx="8" cy="8" r="7.6" fill="#db4437"/><path d="M8 8 L1.42 11.8 A7.6 7.6 0 0 0 8 15.6 L11.8 9 Z" fill="#0f9d58"/><path d="M8 8 L1.42 4.2 A7.6 7.6 0 0 0 1.42 11.8 L4.9 9.8Z" fill="#0f9d58"/><path d="M8 15.6 A7.6 7.6 0 0 0 14.58 4.2 H8 L11.4 9.8Z" fill="#f4c20d"/><path d="M1.42 4.2 A7.6 7.6 0 0 1 14.58 4.2 H8Z" fill="#db4437"/><circle cx="8" cy="8" r="3.9" fill="#fff"/><circle cx="8" cy="8" r="3" fill="#4285f4"/></svg>
<span class="t " id="t43" style="left:766.70px;top:221.27px;transform:scaleX(1.0084);color:#2c2c2c">index.html</span>
<div class="a" style="left:765.4px;top:158.8px;width:8.4px;height:14px;border:1px dotted #555;box-sizing:border-box"></div>
<span class="t " id="t44" style="left:222.80px;top:220.77px;transform:scaleX(0.8263);color:#202020">14 KB</span>
<span class="t " id="t45" style="left:982.80px;top:220.77px;transform:scaleX(0.8340);color:#202020">16 KB</span>
<span class="t " id="t46" style="left:2.50px;top:801.17px;transform:scaleX(0.8677);color:#3c3c3c">0 B</span>
<span class="t " id="t47" style="left:17.40px;top:801.42px;transform:scaleX(1.0366);font-size:8.9px;color:#3c3c3c">（</span>
<span class="t " id="t48" style="left:27.20px;top:801.42px;transform:scaleX(1.0141);font-size:8.9px;color:#3c3c3c">全</span>
<span class="t " id="t49" style="left:40.50px;top:801.17px;transform:scaleX(0.8377);color:#3c3c3c">13.8 KB</span>
<span class="t " id="t50" style="left:72.10px;top:801.42px;transform:scaleX(1.0141);font-size:8.9px;color:#3c3c3c">中</span>
<span class="t " id="t51" style="left:82.00px;top:801.42px;transform:scaleX(1.0366);font-size:8.9px;color:#3c3c3c">）</span>
<span class="t " id="t52" style="left:91.20px;top:801.42px;transform:scaleX(1.0366);font-size:8.9px;color:#3c3c3c">／</span>
<span class="t " id="t53" style="left:103.50px;top:801.17px;transform:scaleX(0.7485);color:#3c3c3c">0</span>
<span class="t " id="t54" style="left:111.00px;top:801.42px;transform:scaleX(0.9803);font-size:8.9px;color:#3c3c3c">個目</span>
<span class="t " id="t55" style="left:129.20px;top:801.42px;transform:scaleX(1.0366);font-size:8.9px;color:#3c3c3c">（</span>
<span class="t " id="t56" style="left:138.90px;top:801.42px;transform:scaleX(1.0254);font-size:8.9px;color:#3c3c3c">全</span>
<span class="t " id="t57" style="left:151.50px;top:801.17px;transform:scaleX(0.7673);color:#3c3c3c">4</span>
<span class="t " id="t58" style="left:158.70px;top:801.42px;transform:scaleX(0.7268);font-size:8.9px;color:#3c3c3c">ファイル</span>
<span class="t " id="t59" style="left:185.90px;top:801.42px;transform:scaleX(0.9915);font-size:8.9px;color:#3c3c3c">中</span>
<span class="t " id="t60" style="left:195.90px;top:801.42px;transform:scaleX(1.0366);font-size:8.9px;color:#3c3c3c">）</span>
<span class="t " id="t61" style="left:750.00px;top:801.17px;transform:scaleX(0.8677);color:#3c3c3c">0 B</span>
<span class="t " id="t62" style="left:764.90px;top:801.42px;transform:scaleX(1.0366);font-size:8.9px;color:#3c3c3c">（</span>
<span class="t " id="t63" style="left:774.70px;top:801.42px;transform:scaleX(1.0141);font-size:8.9px;color:#3c3c3c">全</span>
<span class="t " id="t64" style="left:788.00px;top:801.17px;transform:scaleX(0.8377);color:#3c3c3c">15.0 KB</span>
<span class="t " id="t65" style="left:819.60px;top:801.42px;transform:scaleX(1.0141);font-size:8.9px;color:#3c3c3c">中</span>
<span class="t " id="t66" style="left:829.50px;top:801.42px;transform:scaleX(1.0366);font-size:8.9px;color:#3c3c3c">）</span>
<span class="t " id="t67" style="left:838.70px;top:801.42px;transform:scaleX(1.0366);font-size:8.9px;color:#3c3c3c">／</span>
<span class="t " id="t68" style="left:851.00px;top:801.17px;transform:scaleX(0.7485);color:#3c3c3c">0</span>
<span class="t " id="t69" style="left:858.50px;top:801.42px;transform:scaleX(0.9803);font-size:8.9px;color:#3c3c3c">個目</span>
<span class="t " id="t70" style="left:876.70px;top:801.42px;transform:scaleX(1.0366);font-size:8.9px;color:#3c3c3c">（</span>
<span class="t " id="t71" style="left:886.40px;top:801.42px;transform:scaleX(1.0254);font-size:8.9px;color:#3c3c3c">全</span>
<span class="t " id="t72" style="left:899.00px;top:801.17px;transform:scaleX(0.7673);color:#3c3c3c">4</span>
<span class="t " id="t73" style="left:906.20px;top:801.42px;transform:scaleX(0.7268);font-size:8.9px;color:#3c3c3c">ファイル</span>
<span class="t " id="t74" style="left:933.40px;top:801.42px;transform:scaleX(0.9915);font-size:8.9px;color:#3c3c3c">中</span>
<span class="t " id="t75" style="left:943.40px;top:801.42px;transform:scaleX(1.0366);font-size:8.9px;color:#3c3c3c">）</span>
<div class="a" style="left:0px;top:816px;width:1536px;height:16px;background:#f0f0f0;border-top:1px solid #f7f7f7;box-sizing:border-box"></div>
<div class="a" style="left:1358.4px;top:817.5px;width:1.3px;height:14.5px;background:#e2e2e2;"></div>
<div class="a" style="left:1387px;top:817.5px;width:1.3px;height:14.5px;background:#e2e2e2;"></div>
<div class="a" style="left:1442.7px;top:817.5px;width:1.3px;height:14.5px;background:#e2e2e2;"></div>
<div class="a" style="left:1470.9px;top:817.5px;width:1.3px;height:14.5px;background:#e2e2e2;"></div>
<svg style="left:1366.00px;top:817.60px" width="12.4" height="12.4" viewBox="0 0 16 16"><path d="M4.4 7.4 V5 A3.6 3.6 0 0 1 11.6 5 V7.4" fill="none" stroke="#cfcfcf" stroke-width="1.7"/><rect x="2.2" y="7" width="11.6" height="8.4" rx="0.8" fill="#d6d6d6" stroke="#c8c8c8" stroke-width="0.6"/><rect x="7.2" y="9.6" width="1.6" height="3.2" fill="#bdbdbd"/></svg>
<span class="t " id="t76" style="left:1407.75px;top:817.77px;transform:scaleX(0.7862);color:#222">FTP</span>
<svg style="left:1449.60px;top:818.00px" width="12.4" height="12.4" viewBox="0 0 16 16"><path d="M1 1.6 L12.4 0.6 V11.2 L1 9.8Z" fill="#dcdcdc" stroke="#c6c6c6" stroke-width="0.8"/><path d="M6.6 0.9 V10.6 M1.2 5.6 H12.2" stroke="#cacaca" stroke-width="0.8"/><path d="M10.6 11.2 V14.4 H15 M7.6 14.4 H10.6" fill="none" stroke="#c4c4c4" stroke-width="1"/></svg>
<span class="t " id="t77" style="left:1489.00px;top:817.77px;transform:scaleX(0.8746);color:#222">0:09:01</span>
<div id="mosaic" style="position:absolute;left:0;top:0;width:1536px;height:832px;filter:blur(0.3px)">
<i class="m" style="left:5.21px;top:66.4px;width:4.56px;height:3.75px;background:#1f3a5f"></i>
<i class="m" style="left:5.21px;top:70.15px;width:4.56px;height:3.75px;background:#1f3a5f"></i>
<i class="m" style="left:9.77px;top:66.4px;width:7.16px;height:3.75px;background:#6fa8e8"></i>
<i class="m" style="left:9.77px;top:70.15px;width:7.16px;height:3.75px;background:#6fa8e8"></i>
<i class="m" style="left:25.39px;top:66.4px;width:4.56px;height:3.75px;background:#8a7f78"></i>
<i class="m" style="left:29.95px;top:66.4px;width:3.91px;height:3.75px;background:#3a302a"></i>
<i class="m" style="left:29.95px;top:70.15px;width:3.91px;height:3.75px;background:#3a302a"></i>
<i class="m" style="left:37.76px;top:66.4px;width:3.91px;height:3.75px;background:#4a4040"></i>
<i class="m" style="left:37.76px;top:70.15px;width:3.91px;height:3.75px;background:#4a4040"></i>
<i class="m" style="left:41.67px;top:70.15px;width:3.91px;height:3.75px;background:#3a3030"></i>
<i class="m" style="left:41.67px;top:66.4px;width:3.91px;height:3.75px;background:#9a9090"></i>
<i class="m" style="left:45.57px;top:66.4px;width:7.81px;height:3.75px;background:#3a3a45"></i>
<i class="m" style="left:53.39px;top:66.4px;width:3.91px;height:3.75px;background:#1a1a3a"></i>
<i class="m" style="left:53.39px;top:70.15px;width:3.91px;height:3.75px;background:#1a1a3a"></i>
<i class="m" style="left:57.29px;top:66.4px;width:3.91px;height:3.75px;background:#1a1a3a"></i>
<i class="m" style="left:61.2px;top:66.4px;width:3.91px;height:3.75px;background:#1c1c40"></i>
<i class="m" style="left:61.2px;top:70.15px;width:3.91px;height:3.75px;background:#1c1c40"></i>
<i class="m" style="left:73.57px;top:66.4px;width:3.91px;height:3.75px;background:#8a9090"></i>
<i class="m" style="left:77.47px;top:66.4px;width:3.91px;height:3.75px;background:#b0b0b0"></i>
<i class="m" style="left:77.47px;top:70.15px;width:3.91px;height:3.75px;background:#303030"></i>
<i class="m" style="left:89.84px;top:66.4px;width:3.91px;height:3.75px;background:#101010"></i>
<i class="m" style="left:89.84px;top:70.15px;width:7.16px;height:3.75px;background:#c8c8c8"></i>
<i class="m" style="left:105.47px;top:66.4px;width:3.91px;height:3.75px;background:#2a4a7a"></i>
<i class="m" style="left:105.47px;top:70.15px;width:3.91px;height:3.75px;background:#2a4a7a"></i>
<i class="m" style="left:109.38px;top:66.4px;width:3.91px;height:3.75px;background:#7ab0e8"></i>
<i class="m" style="left:109.38px;top:70.15px;width:3.91px;height:3.75px;background:#4a80c0"></i>
<i class="m" style="left:109.38px;top:73.9px;width:3.91px;height:3.75px;background:#2a4a70"></i>
<i class="m" style="left:113.28px;top:62.65px;width:3.91px;height:3.75px;background:#9aa8b8"></i>
<i class="m" style="left:113.28px;top:66.4px;width:3.91px;height:3.75px;background:#8ac0f0"></i>
<i class="m" style="left:113.28px;top:70.15px;width:3.91px;height:3.75px;background:#7ab0e0"></i>
<i class="m" style="left:117.19px;top:66.4px;width:3.91px;height:3.75px;background:#c0c8d8"></i>
<i class="m" style="left:125.65px;top:70.15px;width:3.91px;height:3.75px;background:#0c0c0c"></i>
<i class="m" style="left:133.46px;top:66.4px;width:3.91px;height:3.75px;background:#a0a0a0"></i>
<i class="m" style="left:133.46px;top:70.15px;width:3.91px;height:3.75px;background:#a0a0a0"></i>
<i class="m" style="left:145.83px;top:66.4px;width:3.91px;height:3.75px;background:#b0a8a8"></i>
<i class="m" style="left:145.83px;top:70.15px;width:3.91px;height:3.75px;background:#c0b8b8"></i>
<i class="m" style="left:149.74px;top:66.4px;width:3.91px;height:3.75px;background:#c8c0c0"></i>
<i class="m" style="left:149.74px;top:70.15px;width:3.91px;height:3.75px;background:#d0c8c8"></i>
<i class="m" style="left:153.65px;top:66.4px;width:3.91px;height:3.75px;background:#404858"></i>
<i class="m" style="left:153.65px;top:70.15px;width:3.91px;height:3.75px;background:#9098a0"></i>
<i class="m" style="left:165.36px;top:66.4px;width:3.91px;height:3.75px;background:#404040"></i>
<i class="m" style="left:173.83px;top:70.15px;width:3.91px;height:3.75px;background:#0c0c0c"></i>
<i class="m" style="left:177.73px;top:66.4px;width:3.91px;height:3.75px;background:#0c0c0c"></i>
<i class="m" style="left:177.73px;top:70.15px;width:3.91px;height:3.75px;background:#b0b0b0"></i>
<i class="m" style="left:181.64px;top:66.4px;width:3.91px;height:3.75px;background:#909090"></i>
<i class="m" style="left:181.64px;top:70.15px;width:3.91px;height:3.75px;background:#d0d0d0"></i>
<i class="m" style="left:4.3px;top:125.4px;width:3.52px;height:3.75px;background:#ccdaee"></i>
<i class="m" style="left:4.3px;top:129.15px;width:3.52px;height:3.75px;background:#ccdaee"></i>
<i class="m" style="left:12.11px;top:125.4px;width:7.42px;height:3.75px;background:#2a3040"></i>
<i class="m" style="left:12.11px;top:129.15px;width:7.42px;height:3.75px;background:#2a3040"></i>
<i class="m" style="left:19.53px;top:125.4px;width:3.91px;height:3.75px;background:#3a4050"></i>
<i class="m" style="left:19.53px;top:129.15px;width:3.91px;height:3.75px;background:#2a3040"></i>
<i class="m" style="left:23.44px;top:129.15px;width:3.91px;height:3.75px;background:#404860"></i>
<i class="m" style="left:36.13px;top:129.15px;width:3.91px;height:3.75px;background:#505868"></i>
<i class="m" style="left:40.04px;top:125.4px;width:3.91px;height:3.75px;background:#808898"></i>
<i class="m" style="left:40.04px;top:129.15px;width:3.91px;height:3.75px;background:#101418"></i>
<i class="m" style="left:43.95px;top:125.4px;width:3.91px;height:3.75px;background:#a8b4c4"></i>
<i class="m" style="left:43.95px;top:129.15px;width:3.91px;height:3.75px;background:#7a8290"></i>
<i class="m" style="left:47.85px;top:129.15px;width:3.91px;height:3.75px;background:#a0a8b8"></i>
<i class="m" style="left:60.55px;top:129.15px;width:3.91px;height:3.75px;background:#8090a0"></i>
<i class="m" style="left:64.45px;top:129.15px;width:3.91px;height:3.75px;background:#101418"></i>
<i class="m" style="left:68.36px;top:125.4px;width:3.91px;height:3.75px;background:#505868"></i>
<i class="m" style="left:68.36px;top:129.15px;width:3.91px;height:3.75px;background:#303848"></i>
<i class="m" style="left:72.27px;top:125.4px;width:3.91px;height:3.75px;background:#606878"></i>
<i class="m" style="left:72.27px;top:129.15px;width:3.91px;height:3.75px;background:#404858"></i>
<i class="m" style="left:76.17px;top:125.4px;width:3.91px;height:3.75px;background:#707888"></i>
<i class="m" style="left:76.17px;top:129.15px;width:3.91px;height:3.75px;background:#707888"></i>
<i class="m" style="left:83.98px;top:129.15px;width:3.91px;height:3.75px;background:#5a7090"></i>
<i class="m" style="left:91.8px;top:129.15px;width:3.91px;height:3.75px;background:#2a4060"></i>
<i class="m" style="left:99.61px;top:129.15px;width:3.91px;height:3.75px;background:#708090"></i>
<i class="m" style="left:108.4px;top:129.15px;width:3.91px;height:3.75px;background:#b0c0d4"></i>
<i class="m" style="left:120.12px;top:125.4px;width:3.91px;height:3.75px;background:#808890"></i>
<i class="m" style="left:120.12px;top:129.15px;width:3.91px;height:3.75px;background:#303038"></i>
<i class="m" style="left:124.02px;top:129.15px;width:3.91px;height:3.75px;background:#8088a0"></i>
<i class="m" style="left:127.93px;top:129.15px;width:3.91px;height:3.75px;background:#8890a0"></i>
<i class="m" style="left:139.65px;top:125.4px;width:3.91px;height:3.75px;background:#d6c8cc"></i>
<i class="m" style="left:139.65px;top:129.15px;width:3.91px;height:3.75px;background:#d6c8cc"></i>
<i class="m" style="left:152.34px;top:129.15px;width:3.91px;height:3.75px;background:#101014"></i>
<i class="m" style="left:156.25px;top:132.9px;width:3.91px;height:3.75px;background:#101014"></i>
<i class="m" style="left:160.16px;top:129.15px;width:3.91px;height:3.75px;background:#101014"></i>
<i class="m" style="left:167.97px;top:129.15px;width:3.91px;height:3.75px;background:#14161a"></i>
<i class="m" style="left:179.69px;top:125.4px;width:3.91px;height:3.75px;background:#5a7090"></i>
<i class="m" style="left:187.5px;top:125.4px;width:3.91px;height:3.75px;background:#4a6080"></i>
<i class="m" style="left:196.29px;top:129.15px;width:3.91px;height:3.75px;background:#303848"></i>
<i class="m" style="left:211.91px;top:125.4px;width:3.91px;height:3.75px;background:#a8b8d0"></i>
<i class="m" style="left:223.63px;top:125.4px;width:3.91px;height:3.75px;background:#2a3a58"></i>
<i class="m" style="left:223.63px;top:129.15px;width:3.91px;height:3.75px;background:#2a3a58"></i>
<i class="m" style="left:227.54px;top:129.15px;width:3.91px;height:3.75px;background:#506078"></i>
<i class="m" style="left:231.45px;top:125.4px;width:3.91px;height:3.75px;background:#3a4a68"></i>
<i class="m" style="left:231.45px;top:129.15px;width:3.91px;height:3.75px;background:#607088"></i>
<i class="m" style="left:235.35px;top:129.15px;width:3.91px;height:3.75px;background:#708098"></i>
<i class="m" style="left:239.26px;top:125.4px;width:3.91px;height:3.75px;background:#1a2a48"></i>
<i class="m" style="left:239.26px;top:129.15px;width:3.91px;height:3.75px;background:#607088"></i>
<i class="m" style="left:243.16px;top:129.15px;width:3.91px;height:3.75px;background:#506078"></i>
<i class="m" style="left:247.07px;top:129.15px;width:3.91px;height:3.75px;background:#8090a8"></i>
<i class="m" style="left:250.98px;top:125.4px;width:3.91px;height:3.75px;background:#707888"></i>
<i class="m" style="left:250.98px;top:129.15px;width:3.91px;height:3.75px;background:#303848"></i>
<i class="m" style="left:254.88px;top:129.15px;width:3.91px;height:3.75px;background:#a0b0c8"></i>
<i class="m" style="left:264.65px;top:129.15px;width:3.91px;height:3.75px;background:#8090a8"></i>
<i class="m" style="left:268.55px;top:129.15px;width:3.91px;height:3.75px;background:#404858"></i>
<i class="m" style="left:272.46px;top:125.4px;width:3.91px;height:3.75px;background:#8088a0"></i>
<i class="m" style="left:272.46px;top:129.15px;width:3.91px;height:3.75px;background:#8890a8"></i>
<i class="m" style="left:276.37px;top:125.4px;width:3.91px;height:3.75px;background:#a0a8b8"></i>
<i class="m" style="left:280.27px;top:125.4px;width:7.81px;height:3.75px;background:#2a3a58"></i>
<i class="m" style="left:280.27px;top:129.15px;width:7.81px;height:3.75px;background:#3a4a68"></i>
<i class="m" style="left:259.05px;top:162.5px;width:3.75px;height:3.75px;background:#d4d4d6"></i>
<i class="m" style="left:266.55px;top:162.5px;width:3.75px;height:3.75px;background:#50545c"></i>
<i class="m" style="left:270.3px;top:162.5px;width:3.75px;height:3.75px;background:#50545c"></i>
<i class="m" style="left:274.05px;top:162.5px;width:3.75px;height:3.75px;background:#16181c"></i>
<i class="m" style="left:285.3px;top:162.5px;width:3.75px;height:3.75px;background:#5a4a3a"></i>
<i class="m" style="left:255.3px;top:166.25px;width:3.75px;height:3.75px;background:#50545c"></i>
<i class="m" style="left:259.05px;top:166.25px;width:3.75px;height:3.75px;background:#50545c"></i>
<i class="m" style="left:262.8px;top:166.25px;width:3.75px;height:3.75px;background:#50545c"></i>
<i class="m" style="left:274.05px;top:166.25px;width:3.75px;height:3.75px;background:#16181c"></i>
<i class="m" style="left:285.3px;top:166.25px;width:3.75px;height:3.75px;background:#4a3a2a"></i>
<i class="m" style="left:311.55px;top:166.25px;width:3.75px;height:3.75px;background:#949698"></i>
<i class="m" style="left:319.05px;top:166.25px;width:3.75px;height:3.75px;background:#949698"></i>
<i class="m" style="left:259.05px;top:177.8px;width:3.75px;height:3.75px;background:#949698"></i>
<i class="m" style="left:262.8px;top:177.8px;width:3.75px;height:3.75px;background:#16181c"></i>
<i class="m" style="left:274.05px;top:177.8px;width:3.75px;height:3.75px;background:#506060"></i>
<i class="m" style="left:296.55px;top:177.8px;width:3.75px;height:3.75px;background:#a8b4ac"></i>
<i class="m" style="left:304.05px;top:177.8px;width:3.75px;height:3.75px;background:#50545c"></i>
<i class="m" style="left:307.8px;top:177.8px;width:3.75px;height:3.75px;background:#50545c"></i>
<i class="m" style="left:262.8px;top:181.55px;width:3.75px;height:3.75px;background:#50545c"></i>
<i class="m" style="left:274.05px;top:181.55px;width:3.75px;height:3.75px;background:#506060"></i>
<i class="m" style="left:277.8px;top:181.55px;width:3.75px;height:3.75px;background:#50545c"></i>
<i class="m" style="left:285.3px;top:181.55px;width:3.75px;height:3.75px;background:#50545c"></i>
<i class="m" style="left:289.05px;top:181.55px;width:3.75px;height:3.75px;background:#a09890"></i>
<i class="m" style="left:300.3px;top:181.55px;width:3.75px;height:3.75px;background:#d4d4d6"></i>
<i class="m" style="left:307.8px;top:189.25px;width:3.75px;height:3.75px;background:#d4d4d6"></i>
<i class="m" style="left:259.05px;top:193.0px;width:3.75px;height:3.75px;background:#50545c"></i>
<i class="m" style="left:274.05px;top:193.0px;width:3.75px;height:3.75px;background:#949698"></i>
<i class="m" style="left:289.05px;top:193.0px;width:3.75px;height:3.75px;background:#16181c"></i>
<i class="m" style="left:292.8px;top:193.0px;width:3.75px;height:3.75px;background:#16181c"></i>
<i class="m" style="left:296.55px;top:193.0px;width:3.75px;height:3.75px;background:#949698"></i>
<i class="m" style="left:304.05px;top:193.0px;width:3.75px;height:3.75px;background:#949698"></i>
<i class="m" style="left:307.8px;top:193.0px;width:3.75px;height:3.75px;background:#949698"></i>
<i class="m" style="left:262.8px;top:196.75px;width:3.75px;height:3.75px;background:#d4d4d6"></i>
<i class="m" style="left:274.05px;top:196.75px;width:3.75px;height:3.75px;background:#949698"></i>
<i class="m" style="left:277.8px;top:196.75px;width:3.75px;height:3.75px;background:#d4d4d6"></i>
<i class="m" style="left:285.3px;top:196.75px;width:3.75px;height:3.75px;background:#949698"></i>
<i class="m" style="left:289.05px;top:196.75px;width:3.75px;height:3.75px;background:#50545c"></i>
<i class="m" style="left:304.05px;top:196.75px;width:3.75px;height:3.75px;background:#949698"></i>
<i class="m" style="left:270.3px;top:208.3px;width:3.75px;height:3.75px;background:#d4d4d6"></i>
<i class="m" style="left:274.05px;top:208.3px;width:3.75px;height:3.75px;background:#949698"></i>
<i class="m" style="left:296.55px;top:208.3px;width:3.75px;height:3.75px;background:#a8b8a8"></i>
<i class="m" style="left:307.8px;top:208.3px;width:3.75px;height:3.75px;background:#50545c"></i>
<i class="m" style="left:259.05px;top:212.05px;width:3.75px;height:3.75px;background:#50545c"></i>
<i class="m" style="left:262.8px;top:212.05px;width:3.75px;height:3.75px;background:#16181c"></i>
<i class="m" style="left:266.55px;top:212.05px;width:3.75px;height:3.75px;background:#949698"></i>
<i class="m" style="left:274.05px;top:212.05px;width:3.75px;height:3.75px;background:#949698"></i>
<i class="m" style="left:296.55px;top:212.05px;width:3.75px;height:3.75px;background:#d4d4d6"></i>
<i class="m" style="left:300.3px;top:212.05px;width:3.75px;height:3.75px;background:#d4d4d6"></i>
<i class="m" style="left:307.8px;top:212.05px;width:3.75px;height:3.75px;background:#949698"></i>
<i class="m" style="left:311.55px;top:212.05px;width:3.75px;height:3.75px;background:#16181c"></i>
<i class="m" style="left:255.3px;top:215.8px;width:3.75px;height:3.75px;background:#949698"></i>
<i class="m" style="left:304.05px;top:215.8px;width:3.75px;height:3.75px;background:#50545c"></i>
<i class="m" style="left:255.3px;top:226.0px;width:3.75px;height:3.75px;background:#949698"></i>
<i class="m" style="left:262.8px;top:226.0px;width:3.75px;height:3.75px;background:#d4d4d6"></i>
<i class="m" style="left:266.55px;top:226.0px;width:3.75px;height:3.75px;background:#949698"></i>
<i class="m" style="left:274.05px;top:226.0px;width:3.75px;height:3.75px;background:#16181c"></i>
<i class="m" style="left:281.55px;top:226.0px;width:3.75px;height:3.75px;background:#304060"></i>
<i class="m" style="left:289.05px;top:226.0px;width:3.75px;height:3.75px;background:#405060"></i>
<i class="m" style="left:292.8px;top:226.0px;width:3.75px;height:3.75px;background:#405060"></i>
<i class="m" style="left:296.55px;top:226.0px;width:3.75px;height:3.75px;background:#949698"></i>
<i class="m" style="left:304.05px;top:226.0px;width:3.75px;height:3.75px;background:#b0a898"></i>
<i class="m" style="left:307.8px;top:226.0px;width:3.75px;height:3.75px;background:#d4d4d6"></i>
<i class="m" style="left:319.05px;top:226.0px;width:3.75px;height:3.75px;background:#50545c"></i>
<i class="m" style="left:322.8px;top:226.0px;width:3.75px;height:3.75px;background:#d4d4d6"></i>
<i class="m" style="left:355.15px;top:162.5px;width:3.75px;height:3.75px;background:#949698"></i>
<i class="m" style="left:358.9px;top:162.5px;width:3.75px;height:3.75px;background:#909aa0"></i>
<i class="m" style="left:373.9px;top:162.5px;width:3.75px;height:3.75px;background:#50545c"></i>
<i class="m" style="left:381.4px;top:162.5px;width:3.75px;height:3.75px;background:#506070"></i>
<i class="m" style="left:388.9px;top:162.5px;width:3.75px;height:3.75px;background:#90a0b0"></i>
<i class="m" style="left:392.65px;top:162.5px;width:3.75px;height:3.75px;background:#50545c"></i>
<i class="m" style="left:351.4px;top:166.25px;width:3.75px;height:3.75px;background:#e4dcd4"></i>
<i class="m" style="left:358.9px;top:166.25px;width:3.75px;height:3.75px;background:#949698"></i>
<i class="m" style="left:370.15px;top:166.25px;width:3.75px;height:3.75px;background:#50545c"></i>
<i class="m" style="left:373.9px;top:166.25px;width:3.75px;height:3.75px;background:#16181c"></i>
<i class="m" style="left:377.65px;top:166.25px;width:3.75px;height:3.75px;background:#d4d4d6"></i>
<i class="m" style="left:381.4px;top:166.25px;width:3.75px;height:3.75px;background:#405060"></i>
<i class="m" style="left:388.9px;top:166.25px;width:3.75px;height:3.75px;background:#90a0b0"></i>
<i class="m" style="left:400.15px;top:166.25px;width:3.75px;height:3.75px;background:#d4d4d6"></i>
<i class="m" style="left:403.9px;top:166.25px;width:3.75px;height:3.75px;background:#d4d4d6"></i>
<i class="m" style="left:415.15px;top:166.25px;width:3.75px;height:3.75px;background:#949698"></i>
<i class="m" style="left:418.9px;top:166.25px;width:3.75px;height:3.75px;background:#d4d4d6"></i>
<i class="m" style="left:430.15px;top:166.25px;width:3.75px;height:3.75px;background:#949698"></i>
<i class="m" style="left:355.15px;top:177.8px;width:3.75px;height:3.75px;background:#949698"></i>
<i class="m" style="left:358.9px;top:177.8px;width:3.75px;height:3.75px;background:#909aa0"></i>
<i class="m" style="left:373.9px;top:177.8px;width:3.75px;height:3.75px;background:#50545c"></i>
<i class="m" style="left:381.4px;top:177.8px;width:3.75px;height:3.75px;background:#506070"></i>
<i class="m" style="left:388.9px;top:177.8px;width:3.75px;height:3.75px;background:#90a0b0"></i>
<i class="m" style="left:392.65px;top:177.8px;width:3.75px;height:3.75px;background:#50545c"></i>
<i class="m" style="left:351.4px;top:181.55px;width:3.75px;height:3.75px;background:#e4dcd4"></i>
<i class="m" style="left:358.9px;top:181.55px;width:3.75px;height:3.75px;background:#949698"></i>
<i class="m" style="left:370.15px;top:181.55px;width:3.75px;height:3.75px;background:#50545c"></i>
<i class="m" style="left:373.9px;top:181.55px;width:3.75px;height:3.75px;background:#16181c"></i>
<i class="m" style="left:377.65px;top:181.55px;width:3.75px;height:3.75px;background:#d4d4d6"></i>
<i class="m" style="left:381.4px;top:181.55px;width:3.75px;height:3.75px;background:#405060"></i>
<i class="m" style="left:388.9px;top:181.55px;width:3.75px;height:3.75px;background:#90a0b0"></i>
<i class="m" style="left:400.15px;top:181.55px;width:3.75px;height:3.75px;background:#d4d4d6"></i>
<i class="m" style="left:403.9px;top:181.55px;width:3.75px;height:3.75px;background:#d4d4d6"></i>
<i class="m" style="left:415.15px;top:181.55px;width:3.75px;height:3.75px;background:#949698"></i>
<i class="m" style="left:418.9px;top:181.55px;width:3.75px;height:3.75px;background:#d4d4d6"></i>
<i class="m" style="left:430.15px;top:181.55px;width:3.75px;height:3.75px;background:#949698"></i>
<i class="m" style="left:355.15px;top:193.0px;width:3.75px;height:3.75px;background:#808890"></i>
<i class="m" style="left:358.9px;top:193.0px;width:3.75px;height:3.75px;background:#d4d4d6"></i>
<i class="m" style="left:373.9px;top:193.0px;width:3.75px;height:3.75px;background:#50545c"></i>
<i class="m" style="left:381.4px;top:193.0px;width:3.75px;height:3.75px;background:#8090a0"></i>
<i class="m" style="left:388.9px;top:193.0px;width:3.75px;height:3.75px;background:#949698"></i>
<i class="m" style="left:392.65px;top:193.0px;width:3.75px;height:3.75px;background:#d4d4d6"></i>
<i class="m" style="left:407.65px;top:193.0px;width:3.75px;height:3.75px;background:#908888"></i>
<i class="m" style="left:430.15px;top:193.0px;width:3.75px;height:3.75px;background:#dcdcf0"></i>
<i class="m" style="left:351.4px;top:196.75px;width:3.75px;height:3.75px;background:#949698"></i>
<i class="m" style="left:355.15px;top:196.75px;width:3.75px;height:3.75px;background:#50545c"></i>
<i class="m" style="left:358.9px;top:196.75px;width:3.75px;height:3.75px;background:#50545c"></i>
<i class="m" style="left:362.65px;top:196.75px;width:3.75px;height:3.75px;background:#50545c"></i>
<i class="m" style="left:366.4px;top:196.75px;width:3.75px;height:3.75px;background:#50545c"></i>
<i class="m" style="left:370.15px;top:196.75px;width:3.75px;height:3.75px;background:#949698"></i>
<i class="m" style="left:373.9px;top:196.75px;width:3.75px;height:3.75px;background:#d4d4d6"></i>
<i class="m" style="left:381.4px;top:196.75px;width:3.75px;height:3.75px;background:#d4d4d6"></i>
<i class="m" style="left:388.9px;top:196.75px;width:3.75px;height:3.75px;background:#949698"></i>
<i class="m" style="left:400.15px;top:196.75px;width:3.75px;height:3.75px;background:#50545c"></i>
<i class="m" style="left:403.9px;top:196.75px;width:3.75px;height:3.75px;background:#d4d4d6"></i>
<i class="m" style="left:422.65px;top:196.75px;width:3.75px;height:3.75px;background:#383020"></i>
<i class="m" style="left:430.15px;top:196.75px;width:3.75px;height:3.75px;background:#dcdcf0"></i>
<i class="m" style="left:355.15px;top:210.5px;width:3.75px;height:3.75px;background:#d4d4d6"></i>
<i class="m" style="left:373.9px;top:210.5px;width:3.75px;height:3.75px;background:#8090a0"></i>
<i class="m" style="left:377.65px;top:210.5px;width:3.75px;height:3.75px;background:#d4d4d6"></i>
<i class="m" style="left:388.9px;top:210.5px;width:3.75px;height:3.75px;background:#a0b0c0"></i>
<i class="m" style="left:400.15px;top:210.5px;width:3.75px;height:3.75px;background:#949698"></i>
<i class="m" style="left:403.9px;top:210.5px;width:3.75px;height:3.75px;background:#949698"></i>
<i class="m" style="left:407.65px;top:210.5px;width:3.75px;height:3.75px;background:#808080"></i>
<i class="m" style="left:355.15px;top:226.0px;width:3.75px;height:3.75px;background:#d4d4d6"></i>
<i class="m" style="left:373.9px;top:226.0px;width:3.75px;height:3.75px;background:#949698"></i>
<i class="m" style="left:377.65px;top:226.0px;width:3.75px;height:3.75px;background:#d4d4d6"></i>
<i class="m" style="left:388.9px;top:226.0px;width:3.75px;height:3.75px;background:#949698"></i>
<i class="m" style="left:392.65px;top:226.0px;width:3.75px;height:3.75px;background:#16181c"></i>
<i class="m" style="left:403.9px;top:226.0px;width:3.75px;height:3.75px;background:#949698"></i>
<i class="m" style="left:407.65px;top:226.0px;width:3.75px;height:3.75px;background:#16181c"></i>
<i class="m" style="left:422.65px;top:226.0px;width:3.75px;height:3.75px;background:#16181c"></i>
<i class="m" style="left:426.4px;top:226.0px;width:3.75px;height:3.75px;background:#949698"></i>
<i class="m" style="left:430.15px;top:226.0px;width:3.75px;height:3.75px;background:#d4d4d6"></i>
<i class="m" style="left:1015.2px;top:177.9px;width:3.75px;height:3.75px;background:#949698"></i>
<i class="m" style="left:1026.45px;top:177.9px;width:3.75px;height:3.75px;background:#404858"></i>
<i class="m" style="left:1030.2px;top:177.9px;width:3.75px;height:3.75px;background:#404858"></i>
<i class="m" style="left:1037.7px;top:177.9px;width:3.75px;height:3.75px;background:#405060"></i>
<i class="m" style="left:1041.45px;top:177.9px;width:3.75px;height:3.75px;background:#506070"></i>
<i class="m" style="left:1060.2px;top:177.9px;width:3.75px;height:3.75px;background:#50545c"></i>
<i class="m" style="left:1071.45px;top:177.9px;width:3.75px;height:3.75px;background:#50545c"></i>
<i class="m" style="left:1078.95px;top:177.9px;width:3.75px;height:3.75px;background:#949698"></i>
<i class="m" style="left:1082.7px;top:177.9px;width:3.75px;height:3.75px;background:#50545c"></i>
<i class="m" style="left:1090.2px;top:177.9px;width:3.75px;height:3.75px;background:#16181c"></i>
<i class="m" style="left:1093.95px;top:177.9px;width:3.75px;height:3.75px;background:#16181c"></i>
<i class="m" style="left:1015.2px;top:181.65px;width:3.75px;height:3.75px;background:#d4d4d6"></i>
<i class="m" style="left:1018.95px;top:181.65px;width:3.75px;height:3.75px;background:#d4d4d6"></i>
<i class="m" style="left:1022.7px;top:181.65px;width:3.75px;height:3.75px;background:#50545c"></i>
<i class="m" style="left:1033.95px;top:181.65px;width:3.75px;height:3.75px;background:#d4d4d6"></i>
<i class="m" style="left:1045.2px;top:181.65px;width:3.75px;height:3.75px;background:#304060"></i>
<i class="m" style="left:1048.95px;top:181.65px;width:3.75px;height:3.75px;background:#d4d4d6"></i>
<i class="m" style="left:1082.7px;top:181.65px;width:3.75px;height:3.75px;background:#908870"></i>
<i class="m" style="left:1090.2px;top:181.65px;width:3.75px;height:3.75px;background:#16181c"></i>
<i class="m" style="left:1015.2px;top:193.4px;width:3.75px;height:3.75px;background:#949698"></i>
<i class="m" style="left:1022.7px;top:193.4px;width:3.75px;height:3.75px;background:#505860"></i>
<i class="m" style="left:1026.45px;top:193.4px;width:3.75px;height:3.75px;background:#606870"></i>
<i class="m" style="left:1033.95px;top:193.4px;width:3.75px;height:3.75px;background:#d4d4d6"></i>
<i class="m" style="left:1037.7px;top:193.4px;width:3.75px;height:3.75px;background:#d4d4d6"></i>
<i class="m" style="left:1045.2px;top:193.4px;width:3.75px;height:3.75px;background:#303848"></i>
<i class="m" style="left:1060.2px;top:193.4px;width:3.75px;height:3.75px;background:#406060"></i>
<i class="m" style="left:1090.2px;top:193.4px;width:3.75px;height:3.75px;background:#302828"></i>
<i class="m" style="left:1015.2px;top:197.15px;width:3.75px;height:3.75px;background:#50545c"></i>
<i class="m" style="left:1022.7px;top:197.15px;width:3.75px;height:3.75px;background:#50545c"></i>
<i class="m" style="left:1045.2px;top:197.15px;width:3.75px;height:3.75px;background:#182848"></i>
<i class="m" style="left:1048.95px;top:197.15px;width:3.75px;height:3.75px;background:#949698"></i>
<i class="m" style="left:1060.2px;top:197.15px;width:3.75px;height:3.75px;background:#50545c"></i>
<i class="m" style="left:1078.95px;top:197.15px;width:3.75px;height:3.75px;background:#506060"></i>
<i class="m" style="left:1090.2px;top:197.15px;width:3.75px;height:3.75px;background:#302828"></i>
<i class="m" style="left:1015.2px;top:208.7px;width:3.75px;height:3.75px;background:#949698"></i>
<i class="m" style="left:1022.7px;top:208.7px;width:3.75px;height:3.75px;background:#505860"></i>
<i class="m" style="left:1026.45px;top:208.7px;width:3.75px;height:3.75px;background:#606870"></i>
<i class="m" style="left:1033.95px;top:208.7px;width:3.75px;height:3.75px;background:#d4d4d6"></i>
<i class="m" style="left:1037.7px;top:208.7px;width:3.75px;height:3.75px;background:#d4d4d6"></i>
<i class="m" style="left:1045.2px;top:208.7px;width:3.75px;height:3.75px;background:#303848"></i>
<i class="m" style="left:1060.2px;top:208.7px;width:3.75px;height:3.75px;background:#406060"></i>
<i class="m" style="left:1090.2px;top:208.7px;width:3.75px;height:3.75px;background:#a0a090"></i>
<i class="m" style="left:1015.2px;top:212.45px;width:3.75px;height:3.75px;background:#50545c"></i>
<i class="m" style="left:1022.7px;top:212.45px;width:3.75px;height:3.75px;background:#50545c"></i>
<i class="m" style="left:1045.2px;top:212.45px;width:3.75px;height:3.75px;background:#182848"></i>
<i class="m" style="left:1048.95px;top:212.45px;width:3.75px;height:3.75px;background:#949698"></i>
<i class="m" style="left:1060.2px;top:212.45px;width:3.75px;height:3.75px;background:#50545c"></i>
<i class="m" style="left:1078.95px;top:212.45px;width:3.75px;height:3.75px;background:#506060"></i>
<i class="m" style="left:1090.2px;top:212.45px;width:3.75px;height:3.75px;background:#a0a090"></i>
<i class="m" style="left:1018.95px;top:226.2px;width:3.75px;height:3.75px;background:#949698"></i>
<i class="m" style="left:1022.7px;top:226.2px;width:3.75px;height:3.75px;background:#949698"></i>
<i class="m" style="left:1026.45px;top:226.2px;width:3.75px;height:3.75px;background:#404040"></i>
<i class="m" style="left:1033.95px;top:226.2px;width:3.75px;height:3.75px;background:#949698"></i>
<i class="m" style="left:1037.7px;top:226.2px;width:3.75px;height:3.75px;background:#949698"></i>
<i class="m" style="left:1045.2px;top:226.2px;width:3.75px;height:3.75px;background:#304050"></i>
<i class="m" style="left:1056.45px;top:226.2px;width:3.75px;height:3.75px;background:#949698"></i>
<i class="m" style="left:1067.7px;top:226.2px;width:3.75px;height:3.75px;background:#507070"></i>
<i class="m" style="left:1071.45px;top:226.2px;width:3.75px;height:3.75px;background:#507070"></i>
<i class="m" style="left:1075.2px;top:226.2px;width:3.75px;height:3.75px;background:#507070"></i>
<i class="m" style="left:1078.95px;top:226.2px;width:3.75px;height:3.75px;background:#c0c0c8"></i>
<i class="m" style="left:1082.7px;top:226.2px;width:3.75px;height:3.75px;background:#c0c0c8"></i>
<i class="m" style="left:1093.95px;top:226.2px;width:3.75px;height:3.75px;background:#d4d4d6"></i>
<i class="m" style="left:1015.2px;top:229.95px;width:3.75px;height:3.75px;background:#16181c"></i>
<i class="m" style="left:1022.7px;top:229.95px;width:3.75px;height:3.75px;background:#50545c"></i>
<i class="m" style="left:1045.2px;top:229.95px;width:3.75px;height:3.75px;background:#203040"></i>
<i class="m" style="left:1048.95px;top:229.95px;width:3.75px;height:3.75px;background:#949698"></i>
<i class="m" style="left:1052.7px;top:229.95px;width:3.75px;height:3.75px;background:#d4d4d6"></i>
<i class="m" style="left:1060.2px;top:229.95px;width:3.75px;height:3.75px;background:#d4d4d6"></i>
<i class="m" style="left:1063.95px;top:229.95px;width:3.75px;height:3.75px;background:#d4d4d6"></i>
<i class="m" style="left:1071.45px;top:229.95px;width:3.75px;height:3.75px;background:#607070"></i>
<i class="m" style="left:1075.2px;top:229.95px;width:3.75px;height:3.75px;background:#607070"></i>
<i class="m" style="left:1078.95px;top:229.95px;width:3.75px;height:3.75px;background:#d0c8d0"></i>
<i class="m" style="left:1082.7px;top:229.95px;width:3.75px;height:3.75px;background:#d0c8d0"></i>
<i class="m" style="left:1090.2px;top:229.95px;width:3.75px;height:3.75px;background:#50545c"></i>
<i class="m" style="left:1093.95px;top:229.95px;width:3.75px;height:3.75px;background:#d4d4d6"></i>
<i class="m" style="left:1138.6px;top:181.5px;width:3.75px;height:3.75px;background:#50545c"></i>
<i class="m" style="left:1146.1px;top:181.5px;width:3.75px;height:3.75px;background:#50545c"></i>
<i class="m" style="left:1149.85px;top:181.5px;width:3.75px;height:3.75px;background:#16181c"></i>
<i class="m" style="left:1157.35px;top:181.5px;width:3.75px;height:3.75px;background:#50545c"></i>
<i class="m" style="left:1161.1px;top:181.5px;width:3.75px;height:3.75px;background:#16181c"></i>
<i class="m" style="left:1172.35px;top:181.5px;width:3.75px;height:3.75px;background:#16181c"></i>
<i class="m" style="left:1138.6px;top:198px;width:3.75px;height:3.75px;background:#949698"></i>
<i class="m" style="left:1142.35px;top:198px;width:3.75px;height:3.75px;background:#50545c"></i>
<i class="m" style="left:1146.1px;top:198px;width:3.75px;height:3.75px;background:#949698"></i>
<i class="m" style="left:1149.85px;top:198px;width:3.75px;height:3.75px;background:#202840"></i>
<i class="m" style="left:1157.35px;top:198px;width:3.75px;height:3.75px;background:#d4d4d6"></i>
<i class="m" style="left:1161.1px;top:198px;width:3.75px;height:3.75px;background:#302838"></i>
<i class="m" style="left:1164.85px;top:198px;width:3.75px;height:3.75px;background:#d4d4d6"></i>
<i class="m" style="left:1172.35px;top:198px;width:3.75px;height:3.75px;background:#c4c4c4"></i>
<i class="m" style="left:1138.6px;top:213.3px;width:3.75px;height:3.75px;background:#949698"></i>
<i class="m" style="left:1142.35px;top:213.3px;width:3.75px;height:3.75px;background:#50545c"></i>
<i class="m" style="left:1146.1px;top:213.3px;width:3.75px;height:3.75px;background:#949698"></i>
<i class="m" style="left:1149.85px;top:213.3px;width:3.75px;height:3.75px;background:#202840"></i>
<i class="m" style="left:1157.35px;top:213.3px;width:3.75px;height:3.75px;background:#d4d4d6"></i>
<i class="m" style="left:1161.1px;top:213.3px;width:3.75px;height:3.75px;background:#302838"></i>
<i class="m" style="left:1164.85px;top:213.3px;width:3.75px;height:3.75px;background:#d4d4d6"></i>
<i class="m" style="left:1172.35px;top:213.3px;width:3.75px;height:3.75px;background:#c4c4c4"></i>
<i class="m" style="left:1138.6px;top:226.2px;width:3.75px;height:3.75px;background:#a0a8a0"></i>
<i class="m" style="left:1149.85px;top:226.2px;width:3.75px;height:3.75px;background:#90a0a0"></i>
<i class="m" style="left:1164.85px;top:226.2px;width:3.75px;height:3.75px;background:#16181c"></i>
<i class="m" style="left:1138.6px;top:229.95px;width:3.75px;height:3.75px;background:#949698"></i>
<i class="m" style="left:1142.35px;top:229.95px;width:3.75px;height:3.75px;background:#607070"></i>
<i class="m" style="left:1149.85px;top:229.95px;width:3.75px;height:3.75px;background:#d4d4d6"></i>
<i class="m" style="left:1207.0px;top:177.9px;width:3.75px;height:3.75px;background:#505050"></i>
<i class="m" style="left:1210.75px;top:177.9px;width:3.75px;height:3.75px;background:#606060"></i>
<i class="m" style="left:1214.5px;top:177.9px;width:3.75px;height:3.75px;background:#707070"></i>
<i class="m" style="left:1207.0px;top:181.65px;width:3.75px;height:3.75px;background:#d6ceb6"></i>
<i class="m" style="left:1210.75px;top:181.65px;width:3.75px;height:3.75px;background:#50545c"></i>
<i class="m" style="left:1214.5px;top:181.65px;width:3.75px;height:3.75px;background:#d4d4d6"></i>
<i class="m" style="left:1207.0px;top:193.4px;width:3.75px;height:3.75px;background:#50545c"></i>
<i class="m" style="left:1210.75px;top:193.4px;width:3.75px;height:3.75px;background:#808080"></i>
<i class="m" style="left:1214.5px;top:193.4px;width:3.75px;height:3.75px;background:#808080"></i>
<i class="m" style="left:1218.25px;top:193.4px;width:3.75px;height:3.75px;background:#8a8a8a"></i>
<i class="m" style="left:1207.0px;top:197.15px;width:3.75px;height:3.75px;background:#50545c"></i>
<i class="m" style="left:1210.75px;top:197.15px;width:3.75px;height:3.75px;background:#949698"></i>
<i class="m" style="left:1214.5px;top:197.15px;width:3.75px;height:3.75px;background:#d4d4d6"></i>
<i class="m" style="left:1207.0px;top:208.7px;width:3.75px;height:3.75px;background:#50545c"></i>
<i class="m" style="left:1210.75px;top:208.7px;width:3.75px;height:3.75px;background:#808080"></i>
<i class="m" style="left:1214.5px;top:208.7px;width:3.75px;height:3.75px;background:#808080"></i>
<i class="m" style="left:1218.25px;top:208.7px;width:3.75px;height:3.75px;background:#8a8a8a"></i>
<i class="m" style="left:1207.0px;top:212.45px;width:3.75px;height:3.75px;background:#50545c"></i>
<i class="m" style="left:1210.75px;top:212.45px;width:3.75px;height:3.75px;background:#949698"></i>
<i class="m" style="left:1214.5px;top:212.45px;width:3.75px;height:3.75px;background:#d4d4d6"></i>
<i class="m" style="left:1210.75px;top:226.2px;width:3.75px;height:3.75px;background:#949698"></i>
<i class="m" style="left:1207.0px;top:229.95px;width:3.75px;height:3.75px;background:#949698"></i>
<i class="m" style="left:1210.75px;top:229.95px;width:3.75px;height:3.75px;background:#606060"></i>
<i class="m" style="left:1214.5px;top:229.95px;width:3.75px;height:3.75px;background:#d4d4d6"></i>
</div>
</div>
</body></html>
